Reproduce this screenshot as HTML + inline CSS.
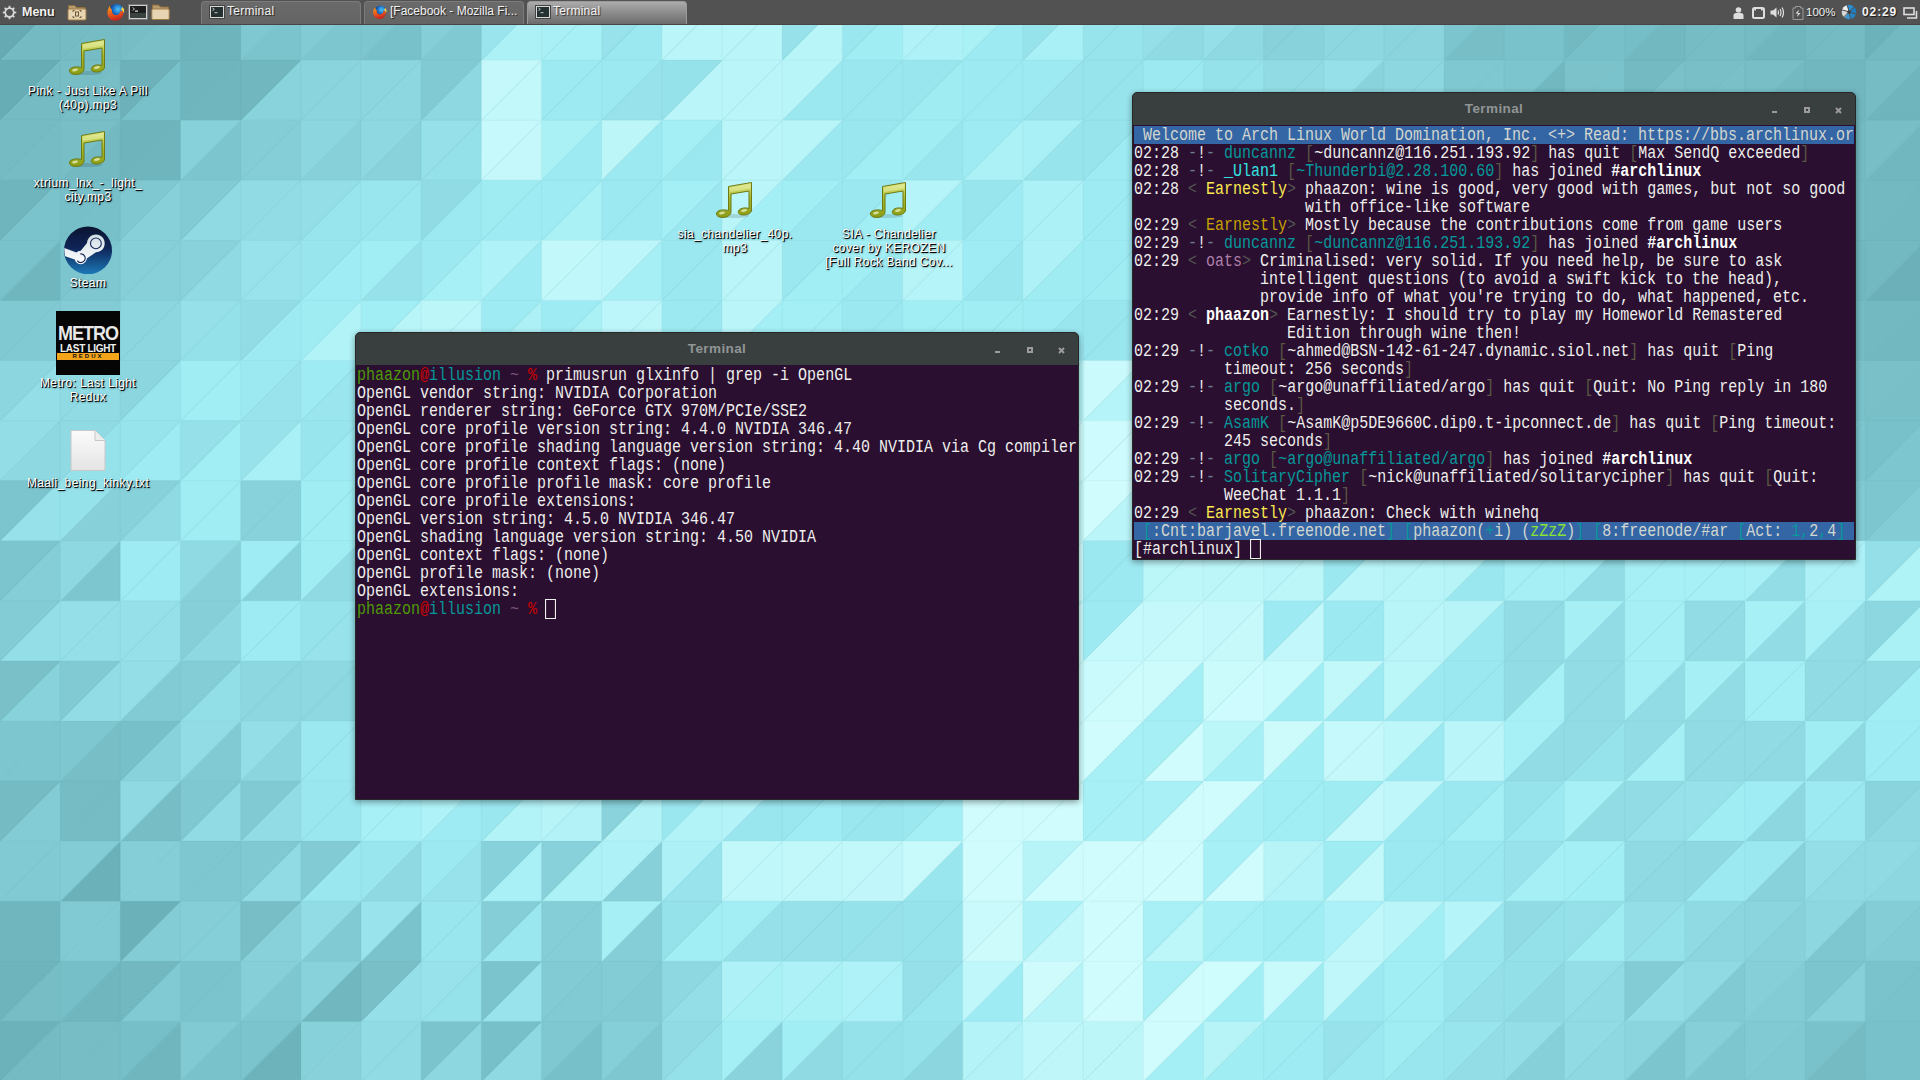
<!DOCTYPE html>
<html><head><meta charset="utf-8">
<style>
html,body{margin:0;padding:0;width:1920px;height:1080px;overflow:hidden;background:#8fd3dc;}
body{position:relative;font-family:"Liberation Sans",sans-serif;}
#bg{position:absolute;left:0;top:0;width:1920px;height:1080px;}
#panel{position:absolute;left:0;top:0;width:1920px;height:25px;background:#4b4b4b;}
.win{position:absolute;background:#393f3f;border:1px solid #262828;border-radius:5px 5px 0 0;box-shadow:0 2px 6px rgba(0,0,0,0.4);}
.title{position:absolute;left:0;right:0;top:0;height:32px;text-align:center;color:#909595;font-weight:bold;font-size:13.5px;letter-spacing:0.4px;line-height:32px;}
.wb{position:absolute;}
.term{position:absolute;left:0;right:0;bottom:0;background:#2a0f30;font-family:"Liberation Mono",monospace;font-size:15px;line-height:18px;color:#eeeeec;overflow:hidden;}
.term .l{height:18px;white-space:pre;}
.term .tx{transform:scaleY(1.2);transform-origin:0 0;height:18px;}
.term .bar{background:#3465a4;width:720px;}
.g{color:#4e9a06}.r{color:#cc0000}.c{color:#06989a}.cb{color:#34e2e2}.y{color:#fce94f}.yd{color:#c4a000}.gr{color:#555753}.dm{color:#75507b}.w{color:#eeeeec}.b{font-weight:bold;color:#ffffff}.br{color:#5a5744}.mv{color:#ad7fa8}.gn{color:#8ae234}
.ex{color:#6b7d8f}
.ttl{color:#d3d7cf;}
.st{color:#d3d7cf}.stc{color:#06989a}.stg{color:#8ae234}
.cur{display:inline-block;width:11px;margin:-0.83px -1px 0 -1px;height:16.67px;vertical-align:top;box-shadow:inset 0 0 0 1.1px #eeeeec;}
#panel{background:#525252;box-shadow:inset 0 -1px 0 #494545;}
.pi{position:absolute;}
.ptxt{position:absolute;color:#f2f2f2;font-size:12px;line-height:14px;white-space:nowrap;text-shadow:1px 1px 1px rgba(0,0,0,0.7);}
.task{position:absolute;top:1px;height:23px;border:1px solid #7b7b7b;border-bottom:none;border-radius:4px 4px 0 0;box-sizing:border-box;background:linear-gradient(#6a6a6a,#646464);}
.task.act{background:linear-gradient(#ababab,#6c6c6c);border-color:#9a9a9a;}
.dl{position:absolute;color:#fff;font-size:12px;letter-spacing:0.4px;line-height:14px;text-align:center;white-space:nowrap;text-shadow:1px 1px 0 #000,1px 1px 2px rgba(0,0,0,0.8);}

</style></head><body>
<div id="bg"><svg width="1920" height="1080" viewBox="0 0 1920 1080"><path fill="#66abb4" d="M0.0 0.0H60.8L0.0 60.7Z"/><path fill="#73bac3" d="M60.8 0.0V60.7H0.0Z"/><path fill="#74bbc4" d="M60.2 0.0H120.9L60.2 60.7Z"/><path fill="#75bcc5" d="M120.9 0.0V60.7H60.2Z"/><path fill="#76bdc6" d="M120.3 0.0H181.1L120.3 60.7Z"/><path fill="#78bfc8" d="M181.1 0.0V60.7H120.3Z"/><path fill="#6db3bc" d="M180.5 0.0H241.3L180.5 60.7Z"/><path fill="#6eb4bd" d="M241.3 0.0V60.7H180.5Z"/><path fill="#80c8d1" d="M240.7 0.0H301.5L240.7 60.7Z"/><path fill="#7cc4cd" d="M301.5 0.0V60.7H240.7Z"/><path fill="#82cbd4" d="M300.9 0.0H361.6L300.9 60.7Z"/><path fill="#7ec6cf" d="M361.6 0.0V60.7H300.9Z"/><path fill="#7ec6cf" d="M361.0 0.0H421.8L361.0 60.7Z"/><path fill="#79c1ca" d="M421.8 0.0V60.7H361.0Z"/><path fill="#85ced7" d="M421.2 0.0H482.0L421.2 60.7Z"/><path fill="#80c9d2" d="M482.0 0.0V60.7H421.2Z"/><path fill="#99e4ed" d="M481.4 0.0H542.1L481.4 60.7Z"/><path fill="#acf1f6" d="M542.1 0.0V60.7H481.4Z"/><path fill="#a8f0f6" d="M541.5 0.0H602.3L541.5 60.7Z"/><path fill="#a7f0f6" d="M602.3 0.0V60.7H541.5Z"/><path fill="#97e2eb" d="M601.7 0.0H662.5L601.7 60.7Z"/><path fill="#9ce8f1" d="M662.5 0.0V60.7H601.7Z"/><path fill="#b9f5f9" d="M661.9 0.0H722.6L661.9 60.7Z"/><path fill="#b9f5f9" d="M722.6 0.0V60.7H661.9Z"/><path fill="#b9f5f9" d="M722.0 0.0H782.8L722.0 60.7Z"/><path fill="#b9f5f9" d="M782.8 0.0V60.7H722.0Z"/><path fill="#96e1ea" d="M782.2 0.0H843.0L782.2 60.7Z"/><path fill="#b8f5f9" d="M843.0 0.0V60.7H782.2Z"/><path fill="#9be7f0" d="M842.4 0.0H903.2L842.4 60.7Z"/><path fill="#a0edf4" d="M903.2 0.0V60.7H842.4Z"/><path fill="#b0f2f7" d="M902.6 0.0H963.3L902.6 60.7Z"/><path fill="#aef2f7" d="M963.3 0.0V60.7H902.6Z"/><path fill="#aaf1f6" d="M962.7 0.0H1023.5L962.7 60.7Z"/><path fill="#9deaf2" d="M1023.5 0.0V60.7H962.7Z"/><path fill="#97e3ec" d="M1022.9 0.0H1083.7L1022.9 60.7Z"/><path fill="#a8f0f6" d="M1083.7 0.0V60.7H1022.9Z"/><path fill="#98e4ed" d="M1083.1 0.0H1143.8L1083.1 60.7Z"/><path fill="#98e4ed" d="M1143.8 0.0V60.7H1083.1Z"/><path fill="#94dfe8" d="M1143.2 0.0H1204.0L1143.2 60.7Z"/><path fill="#8fdae3" d="M1204.0 0.0V60.7H1143.2Z"/><path fill="#94dfe8" d="M1203.4 0.0H1264.2L1203.4 60.7Z"/><path fill="#8fd9e2" d="M1264.2 0.0V60.7H1203.4Z"/><path fill="#88d1da" d="M1263.6 0.0H1324.3L1263.6 60.7Z"/><path fill="#88d2db" d="M1324.3 0.0V60.7H1263.6Z"/><path fill="#8cd7e0" d="M1323.7 0.0H1384.5L1323.7 60.7Z"/><path fill="#8dd7e0" d="M1384.5 0.0V60.7H1323.7Z"/><path fill="#8ad4dd" d="M1383.9 0.0H1444.7L1383.9 60.7Z"/><path fill="#8bd4dd" d="M1444.7 0.0V60.7H1383.9Z"/><path fill="#7dc5ce" d="M1444.1 0.0H1504.8L1444.1 60.7Z"/><path fill="#77bec7" d="M1504.8 0.0V60.7H1444.1Z"/><path fill="#7ac2cb" d="M1504.2 0.0H1565.0L1504.2 60.7Z"/><path fill="#7ac2cb" d="M1565.0 0.0V60.7H1504.2Z"/><path fill="#72b9c2" d="M1564.4 0.0H1625.2L1564.4 60.7Z"/><path fill="#78c0c9" d="M1625.2 0.0V60.7H1564.4Z"/><path fill="#76bec7" d="M1624.6 0.0H1685.4L1624.6 60.7Z"/><path fill="#71b8c1" d="M1685.4 0.0V60.7H1624.6Z"/><path fill="#75bcc5" d="M1684.8 0.0H1745.5L1684.8 60.7Z"/><path fill="#76bdc6" d="M1745.5 0.0V60.7H1684.8Z"/><path fill="#74bbc4" d="M1744.9 0.0H1805.7L1744.9 60.7Z"/><path fill="#6fb6bf" d="M1805.7 0.0V60.7H1744.9Z"/><path fill="#73bac3" d="M1805.1 0.0H1865.9L1805.1 60.7Z"/><path fill="#74bbc4" d="M1865.9 0.0V60.7H1805.1Z"/><path fill="#6cb2bb" d="M1865.3 0.0H1926.0L1865.3 60.7Z"/><path fill="#72b9c2" d="M1926.0 0.0V60.7H1865.3Z"/><path fill="#67adb6" d="M0.0 60.1H60.8L0.0 120.8Z"/><path fill="#74bbc4" d="M60.8 60.1V120.8H0.0Z"/><path fill="#76bdc6" d="M60.2 60.1H120.9L60.2 120.8Z"/><path fill="#77bec7" d="M120.9 60.1V120.8H60.2Z"/><path fill="#6db2bb" d="M120.3 60.1H181.1L120.3 120.8Z"/><path fill="#79c1ca" d="M181.1 60.1V120.8H120.3Z"/><path fill="#6fb5be" d="M180.5 60.1H241.3L180.5 120.8Z"/><path fill="#70b6bf" d="M241.3 60.1V120.8H180.5Z"/><path fill="#71b7c0" d="M240.7 60.1H301.5L240.7 120.8Z"/><path fill="#89d3dc" d="M301.5 60.1V120.8H240.7Z"/><path fill="#8ad4dd" d="M300.9 60.1H361.6L300.9 120.8Z"/><path fill="#8bd5de" d="M361.6 60.1V120.8H300.9Z"/><path fill="#8cd6df" d="M361.0 60.1H421.8L361.0 120.8Z"/><path fill="#8dd7e0" d="M421.8 60.1V120.8H361.0Z"/><path fill="#82cad3" d="M421.2 60.1H482.0L421.2 120.8Z"/><path fill="#8ed8e1" d="M482.0 60.1V120.8H421.2Z"/><path fill="#c4f8fb" d="M481.4 60.1H542.1L481.4 120.8Z"/><path fill="#c3f8fb" d="M542.1 60.1V120.8H481.4Z"/><path fill="#9eeaf2" d="M541.5 60.1H602.3L541.5 120.8Z"/><path fill="#9deaf2" d="M602.3 60.1V120.8H541.5Z"/><path fill="#9ce9f1" d="M601.7 60.1H662.5L601.7 120.8Z"/><path fill="#97e2eb" d="M662.5 60.1V120.8H601.7Z"/><path fill="#96e2eb" d="M661.9 60.1H722.6L661.9 120.8Z"/><path fill="#b9f5f9" d="M722.6 60.1V120.8H661.9Z"/><path fill="#b9f5f9" d="M722.0 60.1H782.8L722.0 120.8Z"/><path fill="#b9f5f9" d="M782.8 60.1V120.8H722.0Z"/><path fill="#b8f5f9" d="M782.2 60.1H843.0L782.2 120.8Z"/><path fill="#9ce8f1" d="M843.0 60.1V120.8H782.2Z"/><path fill="#9be7f0" d="M842.4 60.1H903.2L842.4 120.8Z"/><path fill="#9be7f0" d="M903.2 60.1V120.8H842.4Z"/><path fill="#9ae6ef" d="M902.6 60.1H963.3L902.6 120.8Z"/><path fill="#9fecf3" d="M963.3 60.1V120.8H902.6Z"/><path fill="#9eeaf2" d="M962.7 60.1H1023.5L962.7 120.8Z"/><path fill="#9eeaf2" d="M1023.5 60.1V120.8H962.7Z"/><path fill="#9deaf2" d="M1022.9 60.1H1083.7L1022.9 120.8Z"/><path fill="#98e3ec" d="M1083.7 60.1V120.8H1022.9Z"/><path fill="#98e4ed" d="M1083.1 60.1H1143.8L1083.1 120.8Z"/><path fill="#98e4ed" d="M1143.8 60.1V120.8H1083.1Z"/><path fill="#9ce9f1" d="M1143.2 60.1H1204.0L1143.2 120.8Z"/><path fill="#9de9f2" d="M1204.0 60.1V120.8H1143.2Z"/><path fill="#96e2eb" d="M1203.4 60.1H1264.2L1203.4 120.8Z"/><path fill="#97e3ec" d="M1264.2 60.1V120.8H1203.4Z"/><path fill="#90dbe4" d="M1263.6 60.1H1324.3L1263.6 120.8Z"/><path fill="#91dbe4" d="M1324.3 60.1V120.8H1263.6Z"/><path fill="#95e0e9" d="M1323.7 60.1H1384.5L1323.7 120.8Z"/><path fill="#89d3dc" d="M1384.5 60.1V120.8H1323.7Z"/><path fill="#8dd7e0" d="M1383.9 60.1H1444.7L1383.9 120.8Z"/><path fill="#8dd7e0" d="M1444.7 60.1V120.8H1383.9Z"/><path fill="#7fc8d1" d="M1444.1 60.1H1504.8L1444.1 120.8Z"/><path fill="#7fc8d1" d="M1504.8 60.1V120.8H1444.1Z"/><path fill="#7dc5ce" d="M1504.2 60.1H1565.0L1504.2 120.8Z"/><path fill="#71b8c1" d="M1565.0 60.1V120.8H1504.2Z"/><path fill="#7bc2cb" d="M1564.4 60.1H1625.2L1564.4 120.8Z"/><path fill="#7bc3cc" d="M1625.2 60.1V120.8H1564.4Z"/><path fill="#73bac3" d="M1624.6 60.1H1685.4L1624.6 120.8Z"/><path fill="#7ac1ca" d="M1685.4 60.1V120.8H1624.6Z"/><path fill="#78bfc8" d="M1684.8 60.1H1745.5L1684.8 120.8Z"/><path fill="#79c0c9" d="M1745.5 60.1V120.8H1684.8Z"/><path fill="#77bec7" d="M1744.9 60.1H1805.7L1744.9 120.8Z"/><path fill="#72b9c2" d="M1805.7 60.1V120.8H1744.9Z"/><path fill="#71b7c0" d="M1805.1 60.1H1865.9L1805.1 120.8Z"/><path fill="#71b7c0" d="M1865.9 60.1V120.8H1805.1Z"/><path fill="#75bcc5" d="M1865.3 60.1H1926.0L1865.3 120.8Z"/><path fill="#6fb5be" d="M1926.0 60.1V120.8H1865.3Z"/><path fill="#74bbc4" d="M0.0 120.2H60.8L0.0 180.8Z"/><path fill="#75bcc5" d="M60.8 120.2V180.8H0.0Z"/><path fill="#77bec7" d="M60.2 120.2H120.9L60.2 180.8Z"/><path fill="#72b9c2" d="M120.9 120.2V180.8H60.2Z"/><path fill="#6eb4bd" d="M120.3 120.2H181.1L120.3 180.8Z"/><path fill="#6fb5be" d="M181.1 120.2V180.8H120.3Z"/><path fill="#87d1da" d="M180.5 120.2H241.3L180.5 180.8Z"/><path fill="#7dc5ce" d="M241.3 120.2V180.8H180.5Z"/><path fill="#84cdd6" d="M240.7 120.2H301.5L240.7 180.8Z"/><path fill="#85ced7" d="M301.5 120.2V180.8H240.7Z"/><path fill="#8cd6df" d="M300.9 120.2H361.6L300.9 180.8Z"/><path fill="#87d0d9" d="M361.6 120.2V180.8H300.9Z"/><path fill="#8dd8e1" d="M361.0 120.2H421.8L361.0 180.8Z"/><path fill="#89d2db" d="M421.8 120.2V180.8H361.0Z"/><path fill="#95e0e9" d="M421.2 120.2H482.0L421.2 180.8Z"/><path fill="#95e1ea" d="M482.0 120.2V180.8H421.2Z"/><path fill="#c5f9fb" d="M481.4 120.2H542.1L481.4 180.8Z"/><path fill="#c4f8fb" d="M542.1 120.2V180.8H481.4Z"/><path fill="#aaf1f6" d="M541.5 120.2H602.3L541.5 180.8Z"/><path fill="#9deaf2" d="M602.3 120.2V180.8H541.5Z"/><path fill="#bcf6f9" d="M601.7 120.2H662.5L601.7 180.8Z"/><path fill="#9ce9f1" d="M662.5 120.2V180.8H601.7Z"/><path fill="#a4eff5" d="M661.9 120.2H722.6L661.9 180.8Z"/><path fill="#9ce8f1" d="M722.6 120.2V180.8H661.9Z"/><path fill="#b9f5f9" d="M722.0 120.2H782.8L722.0 180.8Z"/><path fill="#b9f5f9" d="M782.8 120.2V180.8H722.0Z"/><path fill="#b8f5f9" d="M782.2 120.2H843.0L782.2 180.8Z"/><path fill="#9ce8f1" d="M843.0 120.2V180.8H782.2Z"/><path fill="#9be7f0" d="M842.4 120.2H903.2L842.4 180.8Z"/><path fill="#a1eef4" d="M903.2 120.2V180.8H842.4Z"/><path fill="#a0edf4" d="M902.6 120.2H963.3L902.6 180.8Z"/><path fill="#9ae6ef" d="M963.3 120.2V180.8H902.6Z"/><path fill="#9eebf3" d="M962.7 120.2H1023.5L962.7 180.8Z"/><path fill="#acf1f6" d="M1023.5 120.2V180.8H962.7Z"/><path fill="#a9f0f6" d="M1022.9 120.2H1083.7L1022.9 180.8Z"/><path fill="#98e4ed" d="M1083.7 120.2V180.8H1022.9Z"/><path fill="#98e4ed" d="M1083.1 120.2H1143.8L1083.1 180.8Z"/><path fill="#9eebf3" d="M1143.8 120.2V180.8H1083.1Z"/><path fill="#9eebf3" d="M1143.2 120.2H1204.0L1143.2 180.8Z"/><path fill="#9fecf3" d="M1204.0 120.2V180.8H1143.2Z"/><path fill="#98e4ed" d="M1203.4 120.2H1264.2L1203.4 180.8Z"/><path fill="#99e5ee" d="M1264.2 120.2V180.8H1203.4Z"/><path fill="#92dde6" d="M1263.6 120.2H1324.3L1263.6 180.8Z"/><path fill="#93dee7" d="M1324.3 120.2V180.8H1263.6Z"/><path fill="#91dce5" d="M1323.7 120.2H1384.5L1323.7 180.8Z"/><path fill="#91dce5" d="M1384.5 120.2V180.8H1323.7Z"/><path fill="#8fdae3" d="M1383.9 120.2H1444.7L1383.9 180.8Z"/><path fill="#8fdae3" d="M1444.7 120.2V180.8H1383.9Z"/><path fill="#82cad3" d="M1444.1 120.2H1504.8L1444.1 180.8Z"/><path fill="#81cad3" d="M1504.8 120.2V180.8H1444.1Z"/><path fill="#79c1ca" d="M1504.2 120.2H1565.0L1504.2 180.8Z"/><path fill="#79c1ca" d="M1565.0 120.2V180.8H1504.2Z"/><path fill="#7dc5ce" d="M1564.4 120.2H1625.2L1564.4 180.8Z"/><path fill="#7dc5ce" d="M1625.2 120.2V180.8H1564.4Z"/><path fill="#79c0c9" d="M1624.6 120.2H1685.4L1624.6 180.8Z"/><path fill="#79c0c9" d="M1685.4 120.2V180.8H1624.6Z"/><path fill="#7ac2cb" d="M1684.8 120.2H1745.5L1684.8 180.8Z"/><path fill="#7bc3cc" d="M1745.5 120.2V180.8H1684.8Z"/><path fill="#77bec7" d="M1744.9 120.2H1805.7L1744.9 180.8Z"/><path fill="#77bec7" d="M1805.7 120.2V180.8H1744.9Z"/><path fill="#73b9c2" d="M1805.1 120.2H1865.9L1805.1 180.8Z"/><path fill="#73bac3" d="M1865.9 120.2V180.8H1805.1Z"/><path fill="#77bec7" d="M1865.3 120.2H1926.0L1865.3 180.8Z"/><path fill="#71b7c0" d="M1926.0 120.2V180.8H1865.3Z"/><path fill="#6fb5be" d="M0.0 180.2H60.8L0.0 240.9Z"/><path fill="#7bc3cc" d="M60.8 180.2V240.9H0.0Z"/><path fill="#77bfc8" d="M60.2 180.2H120.9L60.2 240.9Z"/><path fill="#78c0c9" d="M120.9 180.2V240.9H60.2Z"/><path fill="#80c8d1" d="M120.3 180.2H181.1L120.3 240.9Z"/><path fill="#87d0d9" d="M181.1 180.2V240.9H120.3Z"/><path fill="#82cbd4" d="M180.5 180.2H241.3L180.5 240.9Z"/><path fill="#8fdae3" d="M241.3 180.2V240.9H180.5Z"/><path fill="#90dbe4" d="M240.7 180.2H301.5L240.7 240.9Z"/><path fill="#91dce5" d="M301.5 180.2V240.9H240.7Z"/><path fill="#93dee7" d="M300.9 180.2H361.6L300.9 240.9Z"/><path fill="#99e5ee" d="M361.6 180.2V240.9H300.9Z"/><path fill="#9ae6ef" d="M361.0 180.2H421.8L361.0 240.9Z"/><path fill="#9be7f0" d="M421.8 180.2V240.9H361.0Z"/><path fill="#90dbe4" d="M421.2 180.2H482.0L421.2 240.9Z"/><path fill="#9ce9f1" d="M482.0 180.2V240.9H421.2Z"/><path fill="#9fecf3" d="M481.4 180.2H542.1L481.4 240.9Z"/><path fill="#9febf3" d="M542.1 180.2V240.9H481.4Z"/><path fill="#9eebf3" d="M541.5 180.2H602.3L541.5 240.9Z"/><path fill="#aaf1f6" d="M602.3 180.2V240.9H541.5Z"/><path fill="#9de9f2" d="M601.7 180.2H662.5L601.7 240.9Z"/><path fill="#9de9f2" d="M662.5 180.2V240.9H601.7Z"/><path fill="#a4eff5" d="M661.9 180.2H722.6L661.9 240.9Z"/><path fill="#9ce8f1" d="M722.6 180.2V240.9H661.9Z"/><path fill="#b9f5f9" d="M722.0 180.2H782.8L722.0 240.9Z"/><path fill="#a3eff5" d="M782.8 180.2V240.9H722.0Z"/><path fill="#a2eef5" d="M782.2 180.2H843.0L782.2 240.9Z"/><path fill="#9ce8f1" d="M843.0 180.2V240.9H782.2Z"/><path fill="#9be8f1" d="M842.4 180.2H903.2L842.4 240.9Z"/><path fill="#a1eef5" d="M903.2 180.2V240.9H842.4Z"/><path fill="#b5f4f8" d="M902.6 180.2H963.3L902.6 240.9Z"/><path fill="#a0edf4" d="M963.3 180.2V240.9H902.6Z"/><path fill="#99e5ee" d="M962.7 180.2H1023.5L962.7 240.9Z"/><path fill="#9febf3" d="M1023.5 180.2V240.9H962.7Z"/><path fill="#abf1f6" d="M1022.9 180.2H1083.7L1022.9 240.9Z"/><path fill="#acf1f6" d="M1083.7 180.2V240.9H1022.9Z"/><path fill="#9eebf3" d="M1083.1 180.2H1143.8L1083.1 240.9Z"/><path fill="#9eebf3" d="M1143.8 180.2V240.9H1083.1Z"/><path fill="#98e3ec" d="M1143.2 180.2H1204.0L1143.2 240.9Z"/><path fill="#98e4ed" d="M1204.0 180.2V240.9H1143.2Z"/><path fill="#9ae6ef" d="M1203.4 180.2H1264.2L1203.4 240.9Z"/><path fill="#9be7f0" d="M1264.2 180.2V240.9H1203.4Z"/><path fill="#94dfe8" d="M1263.6 180.2H1324.3L1263.6 240.9Z"/><path fill="#94dfe8" d="M1324.3 180.2V240.9H1263.6Z"/><path fill="#93dee7" d="M1323.7 180.2H1384.5L1323.7 240.9Z"/><path fill="#93dee7" d="M1384.5 180.2V240.9H1323.7Z"/><path fill="#91dce5" d="M1383.9 180.2H1444.7L1383.9 240.9Z"/><path fill="#91dce5" d="M1444.7 180.2V240.9H1383.9Z"/><path fill="#83ccd5" d="M1444.1 180.2H1504.8L1444.1 240.9Z"/><path fill="#83ccd5" d="M1504.8 180.2V240.9H1444.1Z"/><path fill="#7bc3cc" d="M1504.2 180.2H1565.0L1504.2 240.9Z"/><path fill="#7bc3cc" d="M1565.0 180.2V240.9H1504.2Z"/><path fill="#7fc7d0" d="M1564.4 180.2H1625.2L1564.4 240.9Z"/><path fill="#7fc8d1" d="M1625.2 180.2V240.9H1564.4Z"/><path fill="#7bc2cb" d="M1624.6 180.2H1685.4L1624.6 240.9Z"/><path fill="#7bc3cc" d="M1685.4 180.2V240.9H1624.6Z"/><path fill="#7cc4cd" d="M1684.8 180.2H1745.5L1684.8 240.9Z"/><path fill="#7dc5ce" d="M1745.5 180.2V240.9H1684.8Z"/><path fill="#79c0c9" d="M1744.9 180.2H1805.7L1744.9 240.9Z"/><path fill="#79c0c9" d="M1805.7 180.2V240.9H1744.9Z"/><path fill="#74bbc4" d="M1805.1 180.2H1865.9L1805.1 240.9Z"/><path fill="#74bbc4" d="M1865.9 180.2V240.9H1805.1Z"/><path fill="#72b9c2" d="M1865.3 180.2H1926.0L1865.3 240.9Z"/><path fill="#71b8c1" d="M1926.0 180.2V240.9H1865.3Z"/><path fill="#7ac2cb" d="M0.0 240.3H60.8L0.0 301.0Z"/><path fill="#70b6bf" d="M60.8 240.3V301.0H0.0Z"/><path fill="#7dc5ce" d="M60.2 240.3H120.9L60.2 301.0Z"/><path fill="#7ec7d0" d="M120.9 240.3V301.0H60.2Z"/><path fill="#86cfd8" d="M120.3 240.3H181.1L120.3 301.0Z"/><path fill="#87d0d9" d="M181.1 240.3V301.0H120.3Z"/><path fill="#89d2db" d="M180.5 240.3H241.3L180.5 301.0Z"/><path fill="#90dae3" d="M241.3 240.3V301.0H180.5Z"/><path fill="#97e2eb" d="M240.7 240.3H301.5L240.7 301.0Z"/><path fill="#98e3ec" d="M301.5 240.3V301.0H240.7Z"/><path fill="#99e5ee" d="M300.9 240.3H361.6L300.9 301.0Z"/><path fill="#a0ecf4" d="M361.6 240.3V301.0H300.9Z"/><path fill="#a1eef4" d="M361.0 240.3H421.8L361.0 301.0Z"/><path fill="#96e1ea" d="M421.8 240.3V301.0H361.0Z"/><path fill="#9ce9f1" d="M421.2 240.3H482.0L421.2 301.0Z"/><path fill="#a7f0f6" d="M482.0 240.3V301.0H421.2Z"/><path fill="#aff2f7" d="M481.4 240.3H542.1L481.4 301.0Z"/><path fill="#9febf3" d="M542.1 240.3V301.0H481.4Z"/><path fill="#c2f8fa" d="M541.5 240.3H602.3L541.5 301.0Z"/><path fill="#c0f7fa" d="M602.3 240.3V301.0H541.5Z"/><path fill="#bdf6fa" d="M601.7 240.3H662.5L601.7 301.0Z"/><path fill="#a6eff5" d="M662.5 240.3V301.0H601.7Z"/><path fill="#9ce8f1" d="M661.9 240.3H722.6L661.9 301.0Z"/><path fill="#9ce8f1" d="M722.6 240.3V301.0H661.9Z"/><path fill="#b9f5f9" d="M722.0 240.3H782.8L722.0 301.0Z"/><path fill="#b9f5f9" d="M782.8 240.3V301.0H722.0Z"/><path fill="#9ce8f1" d="M782.2 240.3H843.0L782.2 301.0Z"/><path fill="#a2eef5" d="M843.0 240.3V301.0H782.2Z"/><path fill="#a2eef5" d="M842.4 240.3H903.2L842.4 301.0Z"/><path fill="#9be8f1" d="M903.2 240.3V301.0H842.4Z"/><path fill="#b6f4f8" d="M902.6 240.3H963.3L902.6 301.0Z"/><path fill="#b5f4f8" d="M963.3 240.3V301.0H902.6Z"/><path fill="#a0ecf4" d="M962.7 240.3H1023.5L962.7 301.0Z"/><path fill="#9ae6ef" d="M1023.5 240.3V301.0H962.7Z"/><path fill="#aef2f7" d="M1022.9 240.3H1083.7L1022.9 301.0Z"/><path fill="#9fecf3" d="M1083.7 240.3V301.0H1022.9Z"/><path fill="#9febf3" d="M1083.1 240.3H1143.8L1083.1 301.0Z"/><path fill="#9fecf3" d="M1143.8 240.3V301.0H1083.1Z"/><path fill="#9fecf3" d="M1143.2 240.3H1204.0L1143.2 301.0Z"/><path fill="#9fecf4" d="M1204.0 240.3V301.0H1143.2Z"/><path fill="#9febf3" d="M1203.4 240.3H1264.2L1203.4 301.0Z"/><path fill="#9fecf3" d="M1264.2 240.3V301.0H1203.4Z"/><path fill="#96e1ea" d="M1263.6 240.3H1324.3L1263.6 301.0Z"/><path fill="#96e1ea" d="M1324.3 240.3V301.0H1263.6Z"/><path fill="#94e0e9" d="M1323.7 240.3H1384.5L1323.7 301.0Z"/><path fill="#94dfe8" d="M1384.5 240.3V301.0H1323.7Z"/><path fill="#93dee7" d="M1383.9 240.3H1444.7L1383.9 301.0Z"/><path fill="#92dde6" d="M1444.7 240.3V301.0H1383.9Z"/><path fill="#85ced7" d="M1444.1 240.3H1504.8L1444.1 301.0Z"/><path fill="#85ced7" d="M1504.8 240.3V301.0H1444.1Z"/><path fill="#7dc5ce" d="M1504.2 240.3H1565.0L1504.2 301.0Z"/><path fill="#7dc5ce" d="M1565.0 240.3V301.0H1504.2Z"/><path fill="#81c9d2" d="M1564.4 240.3H1625.2L1564.4 301.0Z"/><path fill="#81c9d2" d="M1625.2 240.3V301.0H1564.4Z"/><path fill="#7dc5ce" d="M1624.6 240.3H1685.4L1624.6 301.0Z"/><path fill="#7dc5ce" d="M1685.4 240.3V301.0H1624.6Z"/><path fill="#7ec6cf" d="M1684.8 240.3H1745.5L1684.8 301.0Z"/><path fill="#7ec7d0" d="M1745.5 240.3V301.0H1684.8Z"/><path fill="#74bbc4" d="M1744.9 240.3H1805.7L1744.9 301.0Z"/><path fill="#74bbc4" d="M1805.7 240.3V301.0H1744.9Z"/><path fill="#72b9c2" d="M1805.1 240.3H1865.9L1805.1 301.0Z"/><path fill="#72b8c1" d="M1865.9 240.3V301.0H1805.1Z"/><path fill="#72b9c2" d="M1865.3 240.3H1926.0L1865.3 301.0Z"/><path fill="#6cb1ba" d="M1926.0 240.3V301.0H1865.3Z"/><path fill="#80c9d2" d="M0.0 300.4H60.8L0.0 361.1Z"/><path fill="#81cad3" d="M60.8 300.4V361.1H0.0Z"/><path fill="#83ccd5" d="M60.2 300.4H120.9L60.2 361.1Z"/><path fill="#84cdd6" d="M120.9 300.4V361.1H60.2Z"/><path fill="#8cd6df" d="M120.3 300.4H181.1L120.3 361.1Z"/><path fill="#8dd7e0" d="M181.1 300.4V361.1H120.3Z"/><path fill="#95e0e9" d="M180.5 300.4H241.3L180.5 361.1Z"/><path fill="#95e1ea" d="M241.3 300.4V361.1H180.5Z"/><path fill="#91dce5" d="M240.7 300.4H301.5L240.7 361.1Z"/><path fill="#9eeaf2" d="M301.5 300.4V361.1H240.7Z"/><path fill="#9fecf3" d="M300.9 300.4H361.6L300.9 361.1Z"/><path fill="#b1f3f7" d="M361.6 300.4V361.1H300.9Z"/><path fill="#a1eef4" d="M361.0 300.4H421.8L361.0 361.1Z"/><path fill="#b8f5f9" d="M421.8 300.4V361.1H361.0Z"/><path fill="#bcf6f9" d="M421.2 300.4H482.0L421.2 361.1Z"/><path fill="#bdf6fa" d="M482.0 300.4V361.1H421.2Z"/><path fill="#9febf3" d="M481.4 300.4H542.1L481.4 361.1Z"/><path fill="#adf1f7" d="M542.1 300.4V361.1H481.4Z"/><path fill="#9eebf3" d="M541.5 300.4H602.3L541.5 361.1Z"/><path fill="#aaf1f6" d="M602.3 300.4V361.1H541.5Z"/><path fill="#bdf6fa" d="M601.7 300.4H662.5L601.7 361.1Z"/><path fill="#bcf6f9" d="M662.5 300.4V361.1H601.7Z"/><path fill="#9ce9f1" d="M661.9 300.4H722.6L661.9 361.1Z"/><path fill="#9ce8f1" d="M722.6 300.4V361.1H661.9Z"/><path fill="#b9f5f9" d="M722.0 300.4H782.8L722.0 361.1Z"/><path fill="#a3eff5" d="M782.8 300.4V361.1H722.0Z"/><path fill="#a3eff5" d="M782.2 300.4H843.0L782.2 361.1Z"/><path fill="#a3eef5" d="M843.0 300.4V361.1H782.2Z"/><path fill="#9ce8f1" d="M842.4 300.4H903.2L842.4 361.1Z"/><path fill="#9ce8f1" d="M903.2 300.4V361.1H842.4Z"/><path fill="#a1eef5" d="M902.6 300.4H963.3L902.6 361.1Z"/><path fill="#a1eef5" d="M963.3 300.4V361.1H902.6Z"/><path fill="#a0edf4" d="M962.7 300.4H1023.5L962.7 361.1Z"/><path fill="#a0edf4" d="M1023.5 300.4V361.1H962.7Z"/><path fill="#a0ecf4" d="M1022.9 300.4H1083.7L1022.9 361.1Z"/><path fill="#9ae6ef" d="M1083.7 300.4V361.1H1022.9Z"/><path fill="#9ae6ef" d="M1083.1 300.4H1143.8L1083.1 361.1Z"/><path fill="#9ae6ef" d="M1143.8 300.4V361.1H1083.1Z"/><path fill="#abf1f6" d="M1143.2 300.4H1204.0L1143.2 361.1Z"/><path fill="#acf1f7" d="M1204.0 300.4V361.1H1143.2Z"/><path fill="#a8f0f6" d="M1203.4 300.4H1264.2L1203.4 361.1Z"/><path fill="#a9f0f6" d="M1264.2 300.4V361.1H1203.4Z"/><path fill="#a5eff5" d="M1263.6 300.4H1324.3L1263.6 361.1Z"/><path fill="#a5eff5" d="M1324.3 300.4V361.1H1263.6Z"/><path fill="#95e1ea" d="M1323.7 300.4H1384.5L1323.7 361.1Z"/><path fill="#95e1ea" d="M1384.5 300.4V361.1H1323.7Z"/><path fill="#94dfe8" d="M1383.9 300.4H1444.7L1383.9 361.1Z"/><path fill="#93dee7" d="M1444.7 300.4V361.1H1383.9Z"/><path fill="#86cfd8" d="M1444.1 300.4H1504.8L1444.1 361.1Z"/><path fill="#86cfd8" d="M1504.8 300.4V361.1H1444.1Z"/><path fill="#7ec6cf" d="M1504.2 300.4H1565.0L1504.2 361.1Z"/><path fill="#7ec6cf" d="M1565.0 300.4V361.1H1504.2Z"/><path fill="#82cbd4" d="M1564.4 300.4H1625.2L1564.4 361.1Z"/><path fill="#82cbd4" d="M1625.2 300.4V361.1H1564.4Z"/><path fill="#7ec6cf" d="M1624.6 300.4H1685.4L1624.6 361.1Z"/><path fill="#7ec6cf" d="M1685.4 300.4V361.1H1624.6Z"/><path fill="#7ac1ca" d="M1684.8 300.4H1745.5L1684.8 361.1Z"/><path fill="#79c1ca" d="M1745.5 300.4V361.1H1684.8Z"/><path fill="#78bfc8" d="M1744.9 300.4H1805.7L1744.9 361.1Z"/><path fill="#78bfc8" d="M1805.7 300.4V361.1H1744.9Z"/><path fill="#76bdc6" d="M1805.1 300.4H1865.9L1805.1 361.1Z"/><path fill="#75bcc5" d="M1865.9 300.4V361.1H1805.1Z"/><path fill="#73b9c2" d="M1865.3 300.4H1926.0L1865.3 361.1Z"/><path fill="#72b8c1" d="M1926.0 300.4V361.1H1865.3Z"/><path fill="#8cd6df" d="M0.0 360.5H60.8L0.0 421.2Z"/><path fill="#93dee7" d="M60.8 360.5V421.2H0.0Z"/><path fill="#8fdae3" d="M60.2 360.5H120.9L60.2 421.2Z"/><path fill="#90dbe4" d="M120.9 360.5V421.2H60.2Z"/><path fill="#8cd6df" d="M120.3 360.5H181.1L120.3 421.2Z"/><path fill="#99e5ee" d="M181.1 360.5V421.2H120.3Z"/><path fill="#a0edf4" d="M180.5 360.5H241.3L180.5 421.2Z"/><path fill="#a1eef5" d="M241.3 360.5V421.2H180.5Z"/><path fill="#9de9f2" d="M240.7 360.5H301.5L240.7 421.2Z"/><path fill="#98e3ec" d="M301.5 360.5V421.2H240.7Z"/><path fill="#9febf3" d="M300.9 360.5H361.6L300.9 421.2Z"/><path fill="#9ae5ee" d="M361.6 360.5V421.2H300.9Z"/><path fill="#b5f4f8" d="M361.0 360.5H421.8L361.0 421.2Z"/><path fill="#b6f4f8" d="M421.8 360.5V421.2H361.0Z"/><path fill="#bbf6f9" d="M421.2 360.5H482.0L421.2 421.2Z"/><path fill="#bbf6f9" d="M482.0 360.5V421.2H421.2Z"/><path fill="#bff7fa" d="M481.4 360.5H542.1L481.4 421.2Z"/><path fill="#bff7fa" d="M542.1 360.5V421.2H481.4Z"/><path fill="#b6f4f8" d="M541.5 360.5H602.3L541.5 421.2Z"/><path fill="#b6f4f8" d="M602.3 360.5V421.2H541.5Z"/><path fill="#c1f7fa" d="M601.7 360.5H662.5L601.7 421.2Z"/><path fill="#c0f7fa" d="M662.5 360.5V421.2H601.7Z"/><path fill="#aaf1f6" d="M661.9 360.5H722.6L661.9 421.2Z"/><path fill="#aaf1f6" d="M722.6 360.5V421.2H661.9Z"/><path fill="#d1fcfd" d="M722.0 360.5H782.8L722.0 421.2Z"/><path fill="#d1fcfd" d="M782.8 360.5V421.2H722.0Z"/><path fill="#b5f4f8" d="M782.2 360.5H843.0L782.2 421.2Z"/><path fill="#b6f4f8" d="M843.0 360.5V421.2H782.2Z"/><path fill="#a0edf4" d="M842.4 360.5H903.2L842.4 421.2Z"/><path fill="#a1edf4" d="M903.2 360.5V421.2H842.4Z"/><path fill="#bff7fa" d="M902.6 360.5H963.3L902.6 421.2Z"/><path fill="#bff7fa" d="M963.3 360.5V421.2H902.6Z"/><path fill="#bcf6f9" d="M962.7 360.5H1023.5L962.7 421.2Z"/><path fill="#bcf6f9" d="M1023.5 360.5V421.2H962.7Z"/><path fill="#b8f5f9" d="M1022.9 360.5H1083.7L1022.9 421.2Z"/><path fill="#b8f5f9" d="M1083.7 360.5V421.2H1022.9Z"/><path fill="#cafafc" d="M1083.1 360.5H1143.8L1083.1 421.2Z"/><path fill="#b5f4f8" d="M1143.8 360.5V421.2H1083.1Z"/><path fill="#bcf6f9" d="M1143.2 360.5H1204.0L1143.2 421.2Z"/><path fill="#bcf6f9" d="M1204.0 360.5V421.2H1143.2Z"/><path fill="#b8f5f9" d="M1203.4 360.5H1264.2L1203.4 421.2Z"/><path fill="#b8f5f9" d="M1264.2 360.5V421.2H1203.4Z"/><path fill="#b4f4f8" d="M1263.6 360.5H1324.3L1263.6 421.2Z"/><path fill="#b3f3f8" d="M1324.3 360.5V421.2H1263.6Z"/><path fill="#c4f8fb" d="M1323.7 360.5H1384.5L1323.7 421.2Z"/><path fill="#c3f8fb" d="M1384.5 360.5V421.2H1323.7Z"/><path fill="#bdf6fa" d="M1383.9 360.5H1444.7L1383.9 421.2Z"/><path fill="#bbf6f9" d="M1444.7 360.5V421.2H1383.9Z"/><path fill="#aaf1f6" d="M1444.1 360.5H1504.8L1444.1 421.2Z"/><path fill="#a8f0f6" d="M1504.8 360.5V421.2H1444.1Z"/><path fill="#b9f5f9" d="M1504.2 360.5H1565.0L1504.2 421.2Z"/><path fill="#b7f4f8" d="M1565.0 360.5V421.2H1504.2Z"/><path fill="#9fecf4" d="M1564.4 360.5H1625.2L1564.4 421.2Z"/><path fill="#9fecf3" d="M1625.2 360.5V421.2H1564.4Z"/><path fill="#abf1f6" d="M1624.6 360.5H1685.4L1624.6 421.2Z"/><path fill="#a9f0f6" d="M1685.4 360.5V421.2H1624.6Z"/><path fill="#80c8d1" d="M1684.8 360.5H1745.5L1684.8 421.2Z"/><path fill="#7fc7d0" d="M1745.5 360.5V421.2H1684.8Z"/><path fill="#7ec6cf" d="M1744.9 360.5H1805.7L1744.9 421.2Z"/><path fill="#7dc5ce" d="M1805.7 360.5V421.2H1744.9Z"/><path fill="#7cc4cd" d="M1805.1 360.5H1865.9L1805.1 421.2Z"/><path fill="#7bc3cc" d="M1865.9 360.5V421.2H1805.1Z"/><path fill="#79c0c9" d="M1865.3 360.5H1926.0L1865.3 421.2Z"/><path fill="#78bfc8" d="M1926.0 360.5V421.2H1865.3Z"/><path fill="#92dde6" d="M0.0 420.6H60.8L0.0 481.2Z"/><path fill="#8ed8e1" d="M60.8 420.6V481.2H0.0Z"/><path fill="#8fdae3" d="M60.2 420.6H120.9L60.2 481.2Z"/><path fill="#96e2eb" d="M120.9 420.6V481.2H60.2Z"/><path fill="#98e4ed" d="M120.3 420.6H181.1L120.3 481.2Z"/><path fill="#9febf3" d="M181.1 420.6V481.2H120.3Z"/><path fill="#95e0e9" d="M180.5 420.6H241.3L180.5 481.2Z"/><path fill="#a1eef5" d="M241.3 420.6V481.2H180.5Z"/><path fill="#97e2eb" d="M240.7 420.6H301.5L240.7 481.2Z"/><path fill="#a8f0f6" d="M301.5 420.6V481.2H240.7Z"/><path fill="#99e5ee" d="M300.9 420.6H361.6L300.9 481.2Z"/><path fill="#9febf3" d="M361.6 420.6V481.2H300.9Z"/><path fill="#9ae6ef" d="M361.0 420.6H421.8L361.0 481.2Z"/><path fill="#9be7f0" d="M421.8 420.6V481.2H361.0Z"/><path fill="#a2eef5" d="M421.2 420.6H482.0L421.2 481.2Z"/><path fill="#b9f5f9" d="M482.0 420.6V481.2H421.2Z"/><path fill="#b2f3f8" d="M481.4 420.6H542.1L481.4 481.2Z"/><path fill="#b2f3f8" d="M542.1 420.6V481.2H481.4Z"/><path fill="#b4f4f8" d="M541.5 420.6H602.3L541.5 481.2Z"/><path fill="#b4f4f8" d="M602.3 420.6V481.2H541.5Z"/><path fill="#c0f7fa" d="M601.7 420.6H662.5L601.7 481.2Z"/><path fill="#bff7fa" d="M662.5 420.6V481.2H601.7Z"/><path fill="#aaf1f6" d="M661.9 420.6H722.6L661.9 481.2Z"/><path fill="#a9f0f6" d="M722.6 420.6V481.2H661.9Z"/><path fill="#d1fcfd" d="M722.0 420.6H782.8L722.0 481.2Z"/><path fill="#d1fcfd" d="M782.8 420.6V481.2H722.0Z"/><path fill="#b6f4f8" d="M782.2 420.6H843.0L782.2 481.2Z"/><path fill="#b6f4f8" d="M843.0 420.6V481.2H782.2Z"/><path fill="#a1eef4" d="M842.4 420.6H903.2L842.4 481.2Z"/><path fill="#a1edf4" d="M903.2 420.6V481.2H842.4Z"/><path fill="#c0f7fa" d="M902.6 420.6H963.3L902.6 481.2Z"/><path fill="#bff7fa" d="M963.3 420.6V481.2H902.6Z"/><path fill="#bef7fa" d="M962.7 420.6H1023.5L962.7 481.2Z"/><path fill="#bef6fa" d="M1023.5 420.6V481.2H962.7Z"/><path fill="#d1fcfd" d="M1022.9 420.6H1083.7L1022.9 481.2Z"/><path fill="#d1fcfd" d="M1083.7 420.6V481.2H1022.9Z"/><path fill="#cefbfd" d="M1083.1 420.6H1143.8L1083.1 481.2Z"/><path fill="#cefbfd" d="M1143.8 420.6V481.2H1083.1Z"/><path fill="#cbfafc" d="M1143.2 420.6H1204.0L1143.2 481.2Z"/><path fill="#cafafc" d="M1204.0 420.6V481.2H1143.2Z"/><path fill="#c6f9fb" d="M1203.4 420.6H1264.2L1203.4 481.2Z"/><path fill="#c5f9fb" d="M1264.2 420.6V481.2H1203.4Z"/><path fill="#ccfbfc" d="M1263.6 420.6H1324.3L1263.6 481.2Z"/><path fill="#cbfafc" d="M1324.3 420.6V481.2H1263.6Z"/><path fill="#c6f9fb" d="M1323.7 420.6H1384.5L1323.7 481.2Z"/><path fill="#c4f8fb" d="M1384.5 420.6V481.2H1323.7Z"/><path fill="#bff7fa" d="M1383.9 420.6H1444.7L1383.9 481.2Z"/><path fill="#bdf6fa" d="M1444.7 420.6V481.2H1383.9Z"/><path fill="#acf1f7" d="M1444.1 420.6H1504.8L1444.1 481.2Z"/><path fill="#aaf1f6" d="M1504.8 420.6V481.2H1444.1Z"/><path fill="#baf5f9" d="M1504.2 420.6H1565.0L1504.2 481.2Z"/><path fill="#b8f5f9" d="M1565.0 420.6V481.2H1504.2Z"/><path fill="#a0edf4" d="M1564.4 420.6H1625.2L1564.4 481.2Z"/><path fill="#9fecf3" d="M1625.2 420.6V481.2H1564.4Z"/><path fill="#aaf1f6" d="M1624.6 420.6H1685.4L1624.6 481.2Z"/><path fill="#a8f0f6" d="M1685.4 420.6V481.2H1624.6Z"/><path fill="#a3eff5" d="M1684.8 420.6H1745.5L1684.8 481.2Z"/><path fill="#a1eef4" d="M1745.5 420.6V481.2H1684.8Z"/><path fill="#80c9d2" d="M1744.9 420.6H1805.7L1744.9 481.2Z"/><path fill="#80c8d1" d="M1805.7 420.6V481.2H1744.9Z"/><path fill="#7ec7d0" d="M1805.1 420.6H1865.9L1805.1 481.2Z"/><path fill="#7ec6cf" d="M1865.9 420.6V481.2H1805.1Z"/><path fill="#79c1ca" d="M1865.3 420.6H1926.0L1865.3 481.2Z"/><path fill="#7ec6cf" d="M1926.0 420.6V481.2H1865.3Z"/><path fill="#7dc5ce" d="M0.0 480.6H60.8L0.0 541.3Z"/><path fill="#96e1ea" d="M60.8 480.6V541.3H0.0Z"/><path fill="#96e2eb" d="M60.2 480.6H120.9L60.2 541.3Z"/><path fill="#87d0d9" d="M120.9 480.6V541.3H60.2Z"/><path fill="#87d1da" d="M120.3 480.6H181.1L120.3 541.3Z"/><path fill="#8fdae3" d="M181.1 480.6V541.3H120.3Z"/><path fill="#a0edf4" d="M180.5 480.6H241.3L180.5 541.3Z"/><path fill="#a0edf4" d="M241.3 480.6V541.3H180.5Z"/><path fill="#88d2db" d="M240.7 480.6H301.5L240.7 541.3Z"/><path fill="#88d2db" d="M301.5 480.6V541.3H240.7Z"/><path fill="#a0edf4" d="M300.9 480.6H361.6L300.9 541.3Z"/><path fill="#a0edf4" d="M361.6 480.6V541.3H300.9Z"/><path fill="#b1f3f7" d="M361.0 480.6H421.8L361.0 541.3Z"/><path fill="#b2f3f8" d="M421.8 480.6V541.3H361.0Z"/><path fill="#b6f4f8" d="M421.2 480.6H482.0L421.2 541.3Z"/><path fill="#b6f4f8" d="M482.0 480.6V541.3H421.2Z"/><path fill="#baf5f9" d="M481.4 480.6H542.1L481.4 541.3Z"/><path fill="#baf5f9" d="M542.1 480.6V541.3H481.4Z"/><path fill="#bcf6f9" d="M541.5 480.6H602.3L541.5 541.3Z"/><path fill="#bbf6f9" d="M602.3 480.6V541.3H541.5Z"/><path fill="#bdf6fa" d="M601.7 480.6H662.5L601.7 541.3Z"/><path fill="#bcf6f9" d="M662.5 480.6V541.3H601.7Z"/><path fill="#a8f0f6" d="M661.9 480.6H722.6L661.9 541.3Z"/><path fill="#a7f0f6" d="M722.6 480.6V541.3H661.9Z"/><path fill="#d1fcfd" d="M722.0 480.6H782.8L722.0 541.3Z"/><path fill="#d1fcfd" d="M782.8 480.6V541.3H722.0Z"/><path fill="#b4f4f8" d="M782.2 480.6H843.0L782.2 541.3Z"/><path fill="#b3f3f8" d="M843.0 480.6V541.3H782.2Z"/><path fill="#a0edf4" d="M842.4 480.6H903.2L842.4 541.3Z"/><path fill="#a0edf4" d="M903.2 480.6V541.3H842.4Z"/><path fill="#cafafc" d="M902.6 480.6H963.3L902.6 541.3Z"/><path fill="#c9fafc" d="M963.3 480.6V541.3H902.6Z"/><path fill="#c9fafc" d="M962.7 480.6H1023.5L962.7 541.3Z"/><path fill="#c9fafc" d="M1023.5 480.6V541.3H962.7Z"/><path fill="#c8f9fb" d="M1022.9 480.6H1083.7L1022.9 541.3Z"/><path fill="#c7f9fb" d="M1083.7 480.6V541.3H1022.9Z"/><path fill="#d0fcfd" d="M1083.1 480.6H1143.8L1083.1 541.3Z"/><path fill="#baf5f9" d="M1143.8 480.6V541.3H1083.1Z"/><path fill="#c2f8fa" d="M1143.2 480.6H1204.0L1143.2 541.3Z"/><path fill="#c2f8fa" d="M1204.0 480.6V541.3H1143.2Z"/><path fill="#d1fcfd" d="M1203.4 480.6H1264.2L1203.4 541.3Z"/><path fill="#d1fcfd" d="M1264.2 480.6V541.3H1203.4Z"/><path fill="#cefbfd" d="M1263.6 480.6H1324.3L1263.6 541.3Z"/><path fill="#cdfbfc" d="M1324.3 480.6V541.3H1263.6Z"/><path fill="#c7f9fb" d="M1323.7 480.6H1384.5L1323.7 541.3Z"/><path fill="#c5f9fb" d="M1384.5 480.6V541.3H1323.7Z"/><path fill="#c0f7fa" d="M1383.9 480.6H1444.7L1383.9 541.3Z"/><path fill="#bef6fa" d="M1444.7 480.6V541.3H1383.9Z"/><path fill="#adf2f7" d="M1444.1 480.6H1504.8L1444.1 541.3Z"/><path fill="#abf1f6" d="M1504.8 480.6V541.3H1444.1Z"/><path fill="#bbf6f9" d="M1504.2 480.6H1565.0L1504.2 541.3Z"/><path fill="#b9f5f9" d="M1565.0 480.6V541.3H1504.2Z"/><path fill="#a0edf4" d="M1564.4 480.6H1625.2L1564.4 541.3Z"/><path fill="#9fecf3" d="M1625.2 480.6V541.3H1564.4Z"/><path fill="#aaf1f6" d="M1624.6 480.6H1685.4L1624.6 541.3Z"/><path fill="#a7f0f6" d="M1685.4 480.6V541.3H1624.6Z"/><path fill="#a2eef5" d="M1684.8 480.6H1745.5L1684.8 541.3Z"/><path fill="#a0edf4" d="M1745.5 480.6V541.3H1684.8Z"/><path fill="#99e5ee" d="M1744.9 480.6H1805.7L1744.9 541.3Z"/><path fill="#98e4ed" d="M1805.7 480.6V541.3H1744.9Z"/><path fill="#83ccd5" d="M1805.1 480.6H1865.9L1805.1 541.3Z"/><path fill="#82cbd4" d="M1865.9 480.6V541.3H1805.1Z"/><path fill="#7ec6cf" d="M1865.3 480.6H1926.0L1865.3 541.3Z"/><path fill="#83ccd5" d="M1926.0 480.6V541.3H1865.3Z"/><path fill="#7dc5ce" d="M0.0 540.7H60.8L0.0 601.4Z"/><path fill="#85ced7" d="M60.8 540.7V601.4H0.0Z"/><path fill="#8ed8e1" d="M60.2 540.7H120.9L60.2 601.4Z"/><path fill="#7ec6cf" d="M120.9 540.7V601.4H60.2Z"/><path fill="#9febf3" d="M120.3 540.7H181.1L120.3 601.4Z"/><path fill="#9eebf3" d="M181.1 540.7V601.4H120.3Z"/><path fill="#8fdae3" d="M180.5 540.7H241.3L180.5 601.4Z"/><path fill="#87d0d9" d="M241.3 540.7V601.4H180.5Z"/><path fill="#a0ecf4" d="M240.7 540.7H301.5L240.7 601.4Z"/><path fill="#87d1da" d="M301.5 540.7V601.4H240.7Z"/><path fill="#a0edf4" d="M300.9 540.7H361.6L300.9 601.4Z"/><path fill="#90dae3" d="M361.6 540.7V601.4H300.9Z"/><path fill="#aef2f7" d="M361.0 540.7H421.8L361.0 601.4Z"/><path fill="#99e5ee" d="M421.8 540.7V601.4H361.0Z"/><path fill="#a0edf4" d="M421.2 540.7H482.0L421.2 601.4Z"/><path fill="#a0edf4" d="M482.0 540.7V601.4H421.2Z"/><path fill="#a1eef4" d="M481.4 540.7H542.1L481.4 601.4Z"/><path fill="#a1edf4" d="M542.1 540.7V601.4H481.4Z"/><path fill="#a2eef5" d="M541.5 540.7H602.3L541.5 601.4Z"/><path fill="#a1eef4" d="M602.3 540.7V601.4H541.5Z"/><path fill="#a3eef5" d="M601.7 540.7H662.5L601.7 601.4Z"/><path fill="#a1eef5" d="M662.5 540.7V601.4H601.7Z"/><path fill="#a3eff5" d="M661.9 540.7H722.6L661.9 601.4Z"/><path fill="#a1eef5" d="M722.6 540.7V601.4H661.9Z"/><path fill="#d0fcfd" d="M722.0 540.7H782.8L722.0 601.4Z"/><path fill="#cefbfd" d="M782.8 540.7V601.4H722.0Z"/><path fill="#b0f2f7" d="M782.2 540.7H843.0L782.2 601.4Z"/><path fill="#aef2f7" d="M843.0 540.7V601.4H782.2Z"/><path fill="#c7f9fb" d="M842.4 540.7H903.2L842.4 601.4Z"/><path fill="#c5f9fb" d="M903.2 540.7V601.4H842.4Z"/><path fill="#c8f9fb" d="M902.6 540.7H963.3L902.6 601.4Z"/><path fill="#c7f9fb" d="M963.3 540.7V601.4H902.6Z"/><path fill="#c8f9fb" d="M962.7 540.7H1023.5L962.7 601.4Z"/><path fill="#c8f9fb" d="M1023.5 540.7V601.4H962.7Z"/><path fill="#d1fcfd" d="M1022.9 540.7H1083.7L1022.9 601.4Z"/><path fill="#d1fcfd" d="M1083.7 540.7V601.4H1022.9Z"/><path fill="#9ce8f1" d="M1083.1 540.7H1143.8L1083.1 601.4Z"/><path fill="#9de9f2" d="M1143.8 540.7V601.4H1083.1Z"/><path fill="#bbf6f9" d="M1143.2 540.7H1204.0L1143.2 601.4Z"/><path fill="#bef7fa" d="M1204.0 540.7V601.4H1143.2Z"/><path fill="#bcf6f9" d="M1203.4 540.7H1264.2L1203.4 601.4Z"/><path fill="#bef7fa" d="M1264.2 540.7V601.4H1203.4Z"/><path fill="#baf5f9" d="M1263.6 540.7H1324.3L1263.6 601.4Z"/><path fill="#bcf6f9" d="M1324.3 540.7V601.4H1263.6Z"/><path fill="#9ce8f1" d="M1323.7 540.7H1384.5L1323.7 601.4Z"/><path fill="#b9f5f9" d="M1384.5 540.7V601.4H1323.7Z"/><path fill="#b7f4f8" d="M1383.9 540.7H1444.7L1383.9 601.4Z"/><path fill="#b7f5f9" d="M1444.7 540.7V601.4H1383.9Z"/><path fill="#b6f4f8" d="M1444.1 540.7H1504.8L1444.1 601.4Z"/><path fill="#9be7f0" d="M1504.8 540.7V601.4H1444.1Z"/><path fill="#a5eff5" d="M1504.2 540.7H1565.0L1504.2 601.4Z"/><path fill="#a5eff5" d="M1565.0 540.7V601.4H1504.2Z"/><path fill="#a5eff5" d="M1564.4 540.7H1625.2L1564.4 601.4Z"/><path fill="#91dce5" d="M1625.2 540.7V601.4H1564.4Z"/><path fill="#a6eff5" d="M1624.6 540.7H1685.4L1624.6 601.4Z"/><path fill="#a6f0f6" d="M1685.4 540.7V601.4H1624.6Z"/><path fill="#a7f0f6" d="M1684.8 540.7H1745.5L1684.8 601.4Z"/><path fill="#a7f0f6" d="M1745.5 540.7V601.4H1684.8Z"/><path fill="#a9f0f6" d="M1744.9 540.7H1805.7L1744.9 601.4Z"/><path fill="#92dde6" d="M1805.7 540.7V601.4H1744.9Z"/><path fill="#adf1f7" d="M1805.1 540.7H1865.9L1805.1 601.4Z"/><path fill="#adf1f7" d="M1865.9 540.7V601.4H1805.1Z"/><path fill="#94dfe8" d="M1865.3 540.7H1926.0L1865.3 601.4Z"/><path fill="#b0f3f7" d="M1926.0 540.7V601.4H1865.3Z"/><path fill="#83ccd5" d="M0.0 600.8H60.8L0.0 661.5Z"/><path fill="#93dee7" d="M60.8 600.8V661.5H0.0Z"/><path fill="#94dfe8" d="M60.2 600.8H120.9L60.2 661.5Z"/><path fill="#94dfe8" d="M120.9 600.8V661.5H60.2Z"/><path fill="#95e0e9" d="M120.3 600.8H181.1L120.3 661.5Z"/><path fill="#95e0e9" d="M181.1 600.8V661.5H120.3Z"/><path fill="#86cfd8" d="M180.5 600.8H241.3L180.5 661.5Z"/><path fill="#8dd8e1" d="M241.3 600.8V661.5H180.5Z"/><path fill="#9eebf3" d="M240.7 600.8H301.5L240.7 661.5Z"/><path fill="#9eebf3" d="M301.5 600.8V661.5H240.7Z"/><path fill="#97e3ec" d="M300.9 600.8H361.6L300.9 661.5Z"/><path fill="#97e2eb" d="M361.6 600.8V661.5H300.9Z"/><path fill="#a9f0f6" d="M361.0 600.8H421.8L361.0 661.5Z"/><path fill="#bff7fa" d="M421.8 600.8V661.5H361.0Z"/><path fill="#aef2f7" d="M421.2 600.8H482.0L421.2 661.5Z"/><path fill="#adf2f7" d="M482.0 600.8V661.5H421.2Z"/><path fill="#b1f3f7" d="M481.4 600.8H542.1L481.4 661.5Z"/><path fill="#aff2f7" d="M542.1 600.8V661.5H481.4Z"/><path fill="#b2f3f8" d="M541.5 600.8H602.3L541.5 661.5Z"/><path fill="#b0f2f7" d="M602.3 600.8V661.5H541.5Z"/><path fill="#b2f3f8" d="M601.7 600.8H662.5L601.7 661.5Z"/><path fill="#b0f2f7" d="M662.5 600.8V661.5H601.7Z"/><path fill="#b3f3f8" d="M661.9 600.8H722.6L661.9 661.5Z"/><path fill="#b0f3f7" d="M722.6 600.8V661.5H661.9Z"/><path fill="#b3f3f8" d="M722.0 600.8H782.8L722.0 661.5Z"/><path fill="#b1f3f7" d="M782.8 600.8V661.5H722.0Z"/><path fill="#a9f0f6" d="M782.2 600.8H843.0L782.2 661.5Z"/><path fill="#a7f0f6" d="M843.0 600.8V661.5H782.2Z"/><path fill="#a1eef4" d="M842.4 600.8H903.2L842.4 661.5Z"/><path fill="#a0edf4" d="M903.2 600.8V661.5H842.4Z"/><path fill="#c3f8fb" d="M902.6 600.8H963.3L902.6 661.5Z"/><path fill="#c2f8fa" d="M963.3 600.8V661.5H902.6Z"/><path fill="#c6f9fb" d="M962.7 600.8H1023.5L962.7 661.5Z"/><path fill="#c7f9fb" d="M1023.5 600.8V661.5H962.7Z"/><path fill="#bff7fa" d="M1022.9 600.8H1083.7L1022.9 661.5Z"/><path fill="#d1fcfd" d="M1083.7 600.8V661.5H1022.9Z"/><path fill="#9eeaf2" d="M1083.1 600.8H1143.8L1083.1 661.5Z"/><path fill="#c6f9fb" d="M1143.8 600.8V661.5H1083.1Z"/><path fill="#c4f8fb" d="M1143.2 600.8H1204.0L1143.2 661.5Z"/><path fill="#c8f9fb" d="M1204.0 600.8V661.5H1143.2Z"/><path fill="#c4f8fb" d="M1203.4 600.8H1264.2L1203.4 661.5Z"/><path fill="#c7f9fb" d="M1264.2 600.8V661.5H1203.4Z"/><path fill="#9eeaf2" d="M1263.6 600.8H1324.3L1263.6 661.5Z"/><path fill="#c2f8fb" d="M1324.3 600.8V661.5H1263.6Z"/><path fill="#9de9f2" d="M1323.7 600.8H1384.5L1323.7 661.5Z"/><path fill="#9de9f2" d="M1384.5 600.8V661.5H1323.7Z"/><path fill="#b8f5f9" d="M1383.9 600.8H1444.7L1383.9 661.5Z"/><path fill="#b9f5f9" d="M1444.7 600.8V661.5H1383.9Z"/><path fill="#b7f4f8" d="M1444.1 600.8H1504.8L1444.1 661.5Z"/><path fill="#9be8f1" d="M1504.8 600.8V661.5H1444.1Z"/><path fill="#91dce5" d="M1504.2 600.8H1565.0L1504.2 661.5Z"/><path fill="#91dce5" d="M1565.0 600.8V661.5H1504.2Z"/><path fill="#a5eff5" d="M1564.4 600.8H1625.2L1564.4 661.5Z"/><path fill="#91dce5" d="M1625.2 600.8V661.5H1564.4Z"/><path fill="#a5eff5" d="M1624.6 600.8H1685.4L1624.6 661.5Z"/><path fill="#a5eff5" d="M1685.4 600.8V661.5H1624.6Z"/><path fill="#91dce5" d="M1684.8 600.8H1745.5L1684.8 661.5Z"/><path fill="#91dce5" d="M1745.5 600.8V661.5H1684.8Z"/><path fill="#a6f0f6" d="M1744.9 600.8H1805.7L1744.9 661.5Z"/><path fill="#91dce5" d="M1805.7 600.8V661.5H1744.9Z"/><path fill="#a8f0f6" d="M1805.1 600.8H1865.9L1805.1 661.5Z"/><path fill="#92dce5" d="M1865.9 600.8V661.5H1805.1Z"/><path fill="#8dd7e0" d="M1865.3 600.8H1926.0L1865.3 661.5Z"/><path fill="#aaf1f6" d="M1926.0 600.8V661.5H1865.3Z"/><path fill="#79c0c9" d="M0.0 660.9H60.8L0.0 721.6Z"/><path fill="#88d2db" d="M60.8 660.9V721.6H0.0Z"/><path fill="#82cad3" d="M60.2 660.9H120.9L60.2 721.6Z"/><path fill="#91dce5" d="M120.9 660.9V721.6H60.2Z"/><path fill="#93dee7" d="M120.3 660.9H181.1L120.3 721.6Z"/><path fill="#82cbd4" d="M181.1 660.9V721.6H120.3Z"/><path fill="#84cdd6" d="M180.5 660.9H241.3L180.5 721.6Z"/><path fill="#93dfe8" d="M241.3 660.9V721.6H180.5Z"/><path fill="#8dd7e0" d="M240.7 660.9H301.5L240.7 721.6Z"/><path fill="#8cd7e0" d="M301.5 660.9V721.6H240.7Z"/><path fill="#8ed8e1" d="M300.9 660.9H361.6L300.9 721.6Z"/><path fill="#8dd8e1" d="M361.6 660.9V721.6H300.9Z"/><path fill="#9ce8f1" d="M361.0 660.9H421.8L361.0 721.6Z"/><path fill="#a2eef5" d="M421.8 660.9V721.6H361.0Z"/><path fill="#a8f0f6" d="M421.2 660.9H482.0L421.2 721.6Z"/><path fill="#a7f0f6" d="M482.0 660.9V721.6H421.2Z"/><path fill="#abf1f6" d="M481.4 660.9H542.1L481.4 721.6Z"/><path fill="#aaf1f6" d="M542.1 660.9V721.6H481.4Z"/><path fill="#acf1f7" d="M541.5 660.9H602.3L541.5 721.6Z"/><path fill="#aaf1f6" d="M602.3 660.9V721.6H541.5Z"/><path fill="#9be7f0" d="M601.7 660.9H662.5L601.7 721.6Z"/><path fill="#9be7f0" d="M662.5 660.9V721.6H601.7Z"/><path fill="#acf1f7" d="M661.9 660.9H722.6L661.9 721.6Z"/><path fill="#aaf1f6" d="M722.6 660.9V721.6H661.9Z"/><path fill="#acf1f7" d="M722.0 660.9H782.8L722.0 721.6Z"/><path fill="#aaf1f6" d="M782.8 660.9V721.6H722.0Z"/><path fill="#a2eef5" d="M782.2 660.9H843.0L782.2 721.6Z"/><path fill="#a1eef4" d="M843.0 660.9V721.6H782.2Z"/><path fill="#9febf3" d="M842.4 660.9H903.2L842.4 721.6Z"/><path fill="#9eebf3" d="M903.2 660.9V721.6H842.4Z"/><path fill="#a7f0f6" d="M902.6 660.9H963.3L902.6 721.6Z"/><path fill="#a7f0f6" d="M963.3 660.9V721.6H902.6Z"/><path fill="#c4f8fb" d="M962.7 660.9H1023.5L962.7 721.6Z"/><path fill="#c6f9fb" d="M1023.5 660.9V721.6H962.7Z"/><path fill="#d1fcfd" d="M1022.9 660.9H1083.7L1022.9 721.6Z"/><path fill="#d1fcfd" d="M1083.7 660.9V721.6H1022.9Z"/><path fill="#cafafc" d="M1083.1 660.9H1143.8L1083.1 721.6Z"/><path fill="#cefbfc" d="M1143.8 660.9V721.6H1083.1Z"/><path fill="#cdfbfc" d="M1143.2 660.9H1204.0L1143.2 721.6Z"/><path fill="#a3eff5" d="M1204.0 660.9V721.6H1143.2Z"/><path fill="#ccfbfc" d="M1203.4 660.9H1264.2L1203.4 721.6Z"/><path fill="#cefbfd" d="M1264.2 660.9V721.6H1203.4Z"/><path fill="#c9fafc" d="M1263.6 660.9H1324.3L1263.6 721.6Z"/><path fill="#a0edf4" d="M1324.3 660.9V721.6H1263.6Z"/><path fill="#c2f8fa" d="M1323.7 660.9H1384.5L1323.7 721.6Z"/><path fill="#9eeaf2" d="M1384.5 660.9V721.6H1323.7Z"/><path fill="#bbf6f9" d="M1383.9 660.9H1444.7L1383.9 721.6Z"/><path fill="#9ce9f1" d="M1444.7 660.9V721.6H1383.9Z"/><path fill="#9ce8f1" d="M1444.1 660.9H1504.8L1444.1 721.6Z"/><path fill="#9ce8f1" d="M1504.8 660.9V721.6H1444.1Z"/><path fill="#91dce5" d="M1504.2 660.9H1565.0L1504.2 721.6Z"/><path fill="#a7f0f6" d="M1565.0 660.9V721.6H1504.2Z"/><path fill="#91dce5" d="M1564.4 660.9H1625.2L1564.4 721.6Z"/><path fill="#91dce5" d="M1625.2 660.9V721.6H1564.4Z"/><path fill="#a5eff5" d="M1624.6 660.9H1685.4L1624.6 721.6Z"/><path fill="#91dce5" d="M1685.4 660.9V721.6H1624.6Z"/><path fill="#a5eff5" d="M1684.8 660.9H1745.5L1684.8 721.6Z"/><path fill="#91dce5" d="M1745.5 660.9V721.6H1684.8Z"/><path fill="#a4eff5" d="M1744.9 660.9H1805.7L1744.9 721.6Z"/><path fill="#a4eff5" d="M1805.7 660.9V721.6H1744.9Z"/><path fill="#91dbe4" d="M1805.1 660.9H1865.9L1805.1 721.6Z"/><path fill="#90dbe4" d="M1865.9 660.9V721.6H1805.1Z"/><path fill="#91dbe4" d="M1865.3 660.9H1926.0L1865.3 721.6Z"/><path fill="#a2eef5" d="M1926.0 660.9V721.6H1865.3Z"/><path fill="#7ec6cf" d="M0.0 721.0H60.8L0.0 781.6Z"/><path fill="#7ec6cf" d="M60.8 721.0V781.6H0.0Z"/><path fill="#7fc7d0" d="M60.2 721.0H120.9L60.2 781.6Z"/><path fill="#77bec7" d="M120.9 721.0V781.6H60.2Z"/><path fill="#78c0c9" d="M120.3 721.0H181.1L120.3 781.6Z"/><path fill="#88d2db" d="M181.1 721.0V781.6H120.3Z"/><path fill="#92dce5" d="M180.5 721.0H241.3L180.5 781.6Z"/><path fill="#81cad3" d="M241.3 721.0V781.6H180.5Z"/><path fill="#93dee7" d="M240.7 721.0H301.5L240.7 781.6Z"/><path fill="#8bd5de" d="M301.5 721.0V781.6H240.7Z"/><path fill="#9ce8f1" d="M300.9 721.0H361.6L300.9 781.6Z"/><path fill="#9ce8f1" d="M361.6 721.0V781.6H300.9Z"/><path fill="#b0f2f7" d="M361.0 721.0H421.8L361.0 781.6Z"/><path fill="#b0f2f7" d="M421.8 721.0V781.6H361.0Z"/><path fill="#b7f4f8" d="M421.2 721.0H482.0L421.2 781.6Z"/><path fill="#b6f4f8" d="M482.0 721.0V781.6H421.2Z"/><path fill="#bbf6f9" d="M481.4 721.0H542.1L481.4 781.6Z"/><path fill="#baf5f9" d="M542.1 721.0V781.6H481.4Z"/><path fill="#bcf6f9" d="M541.5 721.0H602.3L541.5 781.6Z"/><path fill="#baf5f9" d="M602.3 721.0V781.6H541.5Z"/><path fill="#9ae6ef" d="M601.7 721.0H662.5L601.7 781.6Z"/><path fill="#99e5ee" d="M662.5 721.0V781.6H601.7Z"/><path fill="#a5eff5" d="M661.9 721.0H722.6L661.9 781.6Z"/><path fill="#a3eff5" d="M722.6 721.0V781.6H661.9Z"/><path fill="#a5eff5" d="M722.0 721.0H782.8L722.0 781.6Z"/><path fill="#a3eff5" d="M782.8 721.0V781.6H722.0Z"/><path fill="#9fecf3" d="M782.2 721.0H843.0L782.2 781.6Z"/><path fill="#9febf3" d="M843.0 721.0V781.6H782.2Z"/><path fill="#9de9f2" d="M842.4 721.0H903.2L842.4 781.6Z"/><path fill="#9ce9f1" d="M903.2 721.0V781.6H842.4Z"/><path fill="#a1eef4" d="M902.6 721.0H963.3L902.6 781.6Z"/><path fill="#a1eef4" d="M963.3 721.0V781.6H902.6Z"/><path fill="#d1fcfd" d="M962.7 721.0H1023.5L962.7 781.6Z"/><path fill="#d1fcfd" d="M1023.5 721.0V781.6H962.7Z"/><path fill="#d1fcfd" d="M1022.9 721.0H1083.7L1022.9 781.6Z"/><path fill="#d1fcfd" d="M1083.7 721.0V781.6H1022.9Z"/><path fill="#d0fcfd" d="M1083.1 721.0H1143.8L1083.1 781.6Z"/><path fill="#a7f0f6" d="M1143.8 721.0V781.6H1083.1Z"/><path fill="#a6eff5" d="M1143.2 721.0H1204.0L1143.2 781.6Z"/><path fill="#d1fcfd" d="M1204.0 721.0V781.6H1143.2Z"/><path fill="#bbf6f9" d="M1203.4 721.0H1264.2L1203.4 781.6Z"/><path fill="#a5eff5" d="M1264.2 721.0V781.6H1203.4Z"/><path fill="#cdfbfc" d="M1263.6 721.0H1324.3L1263.6 781.6Z"/><path fill="#a1eef4" d="M1324.3 721.0V781.6H1263.6Z"/><path fill="#c5f9fb" d="M1323.7 721.0H1384.5L1323.7 781.6Z"/><path fill="#c4f8fb" d="M1384.5 721.0V781.6H1323.7Z"/><path fill="#bef7fa" d="M1383.9 721.0H1444.7L1383.9 781.6Z"/><path fill="#9de9f2" d="M1444.7 721.0V781.6H1383.9Z"/><path fill="#baf5f9" d="M1444.1 721.0H1504.8L1444.1 781.6Z"/><path fill="#baf5f9" d="M1504.8 721.0V781.6H1444.1Z"/><path fill="#a7f0f6" d="M1504.2 721.0H1565.0L1504.2 781.6Z"/><path fill="#92dce5" d="M1565.0 721.0V781.6H1504.2Z"/><path fill="#91dce5" d="M1564.4 721.0H1625.2L1564.4 781.6Z"/><path fill="#97e3ec" d="M1625.2 721.0V781.6H1564.4Z"/><path fill="#91dce5" d="M1624.6 721.0H1685.4L1624.6 781.6Z"/><path fill="#a5eff5" d="M1685.4 721.0V781.6H1624.6Z"/><path fill="#91dbe4" d="M1684.8 721.0H1745.5L1684.8 781.6Z"/><path fill="#90dbe4" d="M1745.5 721.0V781.6H1684.8Z"/><path fill="#90dbe4" d="M1744.9 721.0H1805.7L1744.9 781.6Z"/><path fill="#90dae3" d="M1805.7 721.0V781.6H1744.9Z"/><path fill="#a1edf4" d="M1805.1 721.0H1865.9L1805.1 781.6Z"/><path fill="#8ed9e2" d="M1865.9 721.0V781.6H1805.1Z"/><path fill="#a0ecf4" d="M1865.3 721.0H1926.0L1865.3 781.6Z"/><path fill="#9eebf3" d="M1926.0 721.0V781.6H1865.3Z"/><path fill="#74bbc4" d="M0.0 781.0H60.8L0.0 841.7Z"/><path fill="#84ccd5" d="M60.8 781.0V841.7H0.0Z"/><path fill="#75bcc5" d="M60.2 781.0H120.9L60.2 841.7Z"/><path fill="#75bcc5" d="M120.9 781.0V841.7H60.2Z"/><path fill="#8ed9e2" d="M120.3 781.0H181.1L120.3 841.7Z"/><path fill="#76bdc6" d="M181.1 781.0V841.7H120.3Z"/><path fill="#80c8d1" d="M180.5 781.0H241.3L180.5 841.7Z"/><path fill="#90dbe4" d="M241.3 781.0V841.7H180.5Z"/><path fill="#81cad3" d="M240.7 781.0H301.5L240.7 841.7Z"/><path fill="#92dce5" d="M301.5 781.0V841.7H240.7Z"/><path fill="#9be7f0" d="M300.9 781.0H361.6L300.9 841.7Z"/><path fill="#9be7f0" d="M361.6 781.0V841.7H300.9Z"/><path fill="#a7f0f6" d="M361.0 781.0H421.8L361.0 841.7Z"/><path fill="#a7f0f6" d="M421.8 781.0V841.7H361.0Z"/><path fill="#aff2f7" d="M421.2 781.0H482.0L421.2 841.7Z"/><path fill="#9febf3" d="M482.0 781.0V841.7H421.2Z"/><path fill="#9be7f0" d="M481.4 781.0H542.1L481.4 841.7Z"/><path fill="#b2f3f8" d="M542.1 781.0V841.7H481.4Z"/><path fill="#b6f4f8" d="M541.5 781.0H602.3L541.5 841.7Z"/><path fill="#b3f3f8" d="M602.3 781.0V841.7H541.5Z"/><path fill="#8ad3dc" d="M601.7 781.0H662.5L601.7 841.7Z"/><path fill="#b3f3f8" d="M662.5 781.0V841.7H601.7Z"/><path fill="#9be7f0" d="M661.9 781.0H722.6L661.9 841.7Z"/><path fill="#b2f3f8" d="M722.6 781.0V841.7H661.9Z"/><path fill="#b4f4f8" d="M722.0 781.0H782.8L722.0 841.7Z"/><path fill="#9ae6ef" d="M782.8 781.0V841.7H722.0Z"/><path fill="#9be7f0" d="M782.2 781.0H843.0L782.2 841.7Z"/><path fill="#a0ecf4" d="M843.0 781.0V841.7H782.2Z"/><path fill="#9be7f0" d="M842.4 781.0H903.2L842.4 841.7Z"/><path fill="#9ae6ef" d="M903.2 781.0V841.7H842.4Z"/><path fill="#9ce8f1" d="M902.6 781.0H963.3L902.6 841.7Z"/><path fill="#a4eff5" d="M963.3 781.0V841.7H902.6Z"/><path fill="#d1fcfd" d="M962.7 781.0H1023.5L962.7 841.7Z"/><path fill="#d1fcfd" d="M1023.5 781.0V841.7H962.7Z"/><path fill="#d1fcfd" d="M1022.9 781.0H1083.7L1022.9 841.7Z"/><path fill="#d1fcfd" d="M1083.7 781.0V841.7H1022.9Z"/><path fill="#a7f0f6" d="M1083.1 781.0H1143.8L1083.1 841.7Z"/><path fill="#a9f0f6" d="M1143.8 781.0V841.7H1083.1Z"/><path fill="#a9f0f6" d="M1143.2 781.0H1204.0L1143.2 841.7Z"/><path fill="#d1fcfd" d="M1204.0 781.0V841.7H1143.2Z"/><path fill="#d1fcfd" d="M1203.4 781.0H1264.2L1203.4 841.7Z"/><path fill="#a6eff5" d="M1264.2 781.0V841.7H1203.4Z"/><path fill="#a2eef5" d="M1263.6 781.0H1324.3L1263.6 841.7Z"/><path fill="#a1eef4" d="M1324.3 781.0V841.7H1263.6Z"/><path fill="#9fecf3" d="M1323.7 781.0H1384.5L1323.7 841.7Z"/><path fill="#c4f8fb" d="M1384.5 781.0V841.7H1323.7Z"/><path fill="#bff7fa" d="M1383.9 781.0H1444.7L1383.9 841.7Z"/><path fill="#9de9f2" d="M1444.7 781.0V841.7H1383.9Z"/><path fill="#9ce8f1" d="M1444.1 781.0H1504.8L1444.1 841.7Z"/><path fill="#a4eff5" d="M1504.8 781.0V841.7H1444.1Z"/><path fill="#97e3ec" d="M1504.2 781.0H1565.0L1504.2 841.7Z"/><path fill="#9de9f2" d="M1565.0 781.0V841.7H1504.2Z"/><path fill="#a7f0f6" d="M1564.4 781.0H1625.2L1564.4 841.7Z"/><path fill="#91dce5" d="M1625.2 781.0V841.7H1564.4Z"/><path fill="#91dce5" d="M1624.6 781.0H1685.4L1624.6 841.7Z"/><path fill="#96e1ea" d="M1685.4 781.0V841.7H1624.6Z"/><path fill="#96e1ea" d="M1684.8 781.0H1745.5L1684.8 841.7Z"/><path fill="#a0edf4" d="M1745.5 781.0V841.7H1684.8Z"/><path fill="#a0ecf4" d="M1744.9 781.0H1805.7L1744.9 841.7Z"/><path fill="#8dd7e0" d="M1805.7 781.0V841.7H1744.9Z"/><path fill="#9eeaf2" d="M1805.1 781.0H1865.9L1805.1 841.7Z"/><path fill="#9ce8f1" d="M1865.9 781.0V841.7H1805.1Z"/><path fill="#8ad4dd" d="M1865.3 781.0H1926.0L1865.3 841.7Z"/><path fill="#8dd8e1" d="M1926.0 781.0V841.7H1865.3Z"/><path fill="#82cad3" d="M0.0 841.1H60.8L0.0 901.8Z"/><path fill="#82cad3" d="M60.8 841.1V901.8H0.0Z"/><path fill="#83ccd5" d="M60.2 841.1H120.9L60.2 901.8Z"/><path fill="#6bb1ba" d="M120.9 841.1V901.8H60.2Z"/><path fill="#85ced7" d="M120.3 841.1H181.1L120.3 901.8Z"/><path fill="#85ced7" d="M181.1 841.1V901.8H120.3Z"/><path fill="#7ec7d0" d="M180.5 841.1H241.3L180.5 901.8Z"/><path fill="#7fc7d0" d="M241.3 841.1V901.8H180.5Z"/><path fill="#80c9d2" d="M240.7 841.1H301.5L240.7 901.8Z"/><path fill="#91dbe4" d="M301.5 841.1V901.8H240.7Z"/><path fill="#82cbd4" d="M300.9 841.1H361.6L300.9 901.8Z"/><path fill="#9be7f0" d="M361.6 841.1V901.8H300.9Z"/><path fill="#9ae6ef" d="M361.0 841.1H421.8L361.0 901.8Z"/><path fill="#8fd9e2" d="M421.8 841.1V901.8H361.0Z"/><path fill="#9de9f2" d="M421.2 841.1H482.0L421.2 901.8Z"/><path fill="#97e2eb" d="M482.0 841.1V901.8H421.2Z"/><path fill="#87d1da" d="M481.4 841.1H542.1L481.4 901.8Z"/><path fill="#a9f0f6" d="M542.1 841.1V901.8H481.4Z"/><path fill="#88d1da" d="M541.5 841.1H602.3L541.5 901.8Z"/><path fill="#abf1f6" d="M602.3 841.1V901.8H541.5Z"/><path fill="#aef2f7" d="M601.7 841.1H662.5L601.7 901.8Z"/><path fill="#87d0d9" d="M662.5 841.1V901.8H601.7Z"/><path fill="#adf1f7" d="M661.9 841.1H722.6L661.9 901.8Z"/><path fill="#98e3ec" d="M722.6 841.1V901.8H661.9Z"/><path fill="#c2f8fa" d="M722.0 841.1H782.8L722.0 901.8Z"/><path fill="#bff7fa" d="M782.8 841.1V901.8H722.0Z"/><path fill="#c2f8fa" d="M782.2 841.1H843.0L782.2 901.8Z"/><path fill="#bff7fa" d="M843.0 841.1V901.8H782.2Z"/><path fill="#c3f8fb" d="M842.4 841.1H903.2L842.4 901.8Z"/><path fill="#c1f7fa" d="M903.2 841.1V901.8H842.4Z"/><path fill="#c8f9fb" d="M902.6 841.1H963.3L902.6 901.8Z"/><path fill="#9ae6ef" d="M963.3 841.1V901.8H902.6Z"/><path fill="#d1fcfd" d="M962.7 841.1H1023.5L962.7 901.8Z"/><path fill="#d1fcfd" d="M1023.5 841.1V901.8H962.7Z"/><path fill="#b7f4f8" d="M1022.9 841.1H1083.7L1022.9 901.8Z"/><path fill="#d1fcfd" d="M1083.7 841.1V901.8H1022.9Z"/><path fill="#d1fcfd" d="M1083.1 841.1H1143.8L1083.1 901.8Z"/><path fill="#d1fcfd" d="M1143.8 841.1V901.8H1083.1Z"/><path fill="#d1fcfd" d="M1143.2 841.1H1204.0L1143.2 901.8Z"/><path fill="#d1fcfd" d="M1204.0 841.1V901.8H1143.2Z"/><path fill="#a6f0f6" d="M1203.4 841.1H1264.2L1203.4 901.8Z"/><path fill="#d1fcfd" d="M1264.2 841.1V901.8H1203.4Z"/><path fill="#b7f4f8" d="M1263.6 841.1H1324.3L1263.6 901.8Z"/><path fill="#b4f4f8" d="M1324.3 841.1V901.8H1263.6Z"/><path fill="#9fecf3" d="M1323.7 841.1H1384.5L1323.7 901.8Z"/><path fill="#c2f8fa" d="M1384.5 841.1V901.8H1323.7Z"/><path fill="#9de9f2" d="M1383.9 841.1H1444.7L1383.9 901.8Z"/><path fill="#9ce9f1" d="M1444.7 841.1V901.8H1383.9Z"/><path fill="#9ce8f1" d="M1444.1 841.1H1504.8L1444.1 901.8Z"/><path fill="#9be8f1" d="M1504.8 841.1V901.8H1444.1Z"/><path fill="#97e2eb" d="M1504.2 841.1H1565.0L1504.2 901.8Z"/><path fill="#a5eff5" d="M1565.0 841.1V901.8H1504.2Z"/><path fill="#a4eff5" d="M1564.4 841.1H1625.2L1564.4 901.8Z"/><path fill="#a2eef5" d="M1625.2 841.1V901.8H1564.4Z"/><path fill="#90dae3" d="M1624.6 841.1H1685.4L1624.6 901.8Z"/><path fill="#8ed9e2" d="M1685.4 841.1V901.8H1624.6Z"/><path fill="#8ed8e1" d="M1684.8 841.1H1745.5L1684.8 901.8Z"/><path fill="#9de9f2" d="M1745.5 841.1V901.8H1684.8Z"/><path fill="#9ce8f1" d="M1744.9 841.1H1805.7L1744.9 901.8Z"/><path fill="#88d2db" d="M1805.7 841.1V901.8H1744.9Z"/><path fill="#93dee7" d="M1805.1 841.1H1865.9L1805.1 901.8Z"/><path fill="#90dae3" d="M1865.9 841.1V901.8H1805.1Z"/><path fill="#90dae3" d="M1865.3 841.1H1926.0L1865.3 901.8Z"/><path fill="#8dd7e0" d="M1926.0 841.1V901.8H1865.3Z"/><path fill="#70b6bf" d="M0.0 901.2H60.8L0.0 961.9Z"/><path fill="#70b6bf" d="M60.8 901.2V961.9H0.0Z"/><path fill="#81cad3" d="M60.2 901.2H120.9L60.2 961.9Z"/><path fill="#81cad3" d="M120.9 901.2V961.9H60.2Z"/><path fill="#6bb1ba" d="M120.3 901.2H181.1L120.3 961.9Z"/><path fill="#83ccd5" d="M181.1 901.2V961.9H120.3Z"/><path fill="#85ced7" d="M180.5 901.2H241.3L180.5 961.9Z"/><path fill="#85cfd8" d="M241.3 901.2V961.9H180.5Z"/><path fill="#77bec7" d="M240.7 901.2H301.5L240.7 961.9Z"/><path fill="#88d1da" d="M301.5 901.2V961.9H240.7Z"/><path fill="#91dce5" d="M300.9 901.2H361.6L300.9 961.9Z"/><path fill="#82cad3" d="M361.6 901.2V961.9H300.9Z"/><path fill="#98e3ec" d="M361.0 901.2H421.8L361.0 961.9Z"/><path fill="#7bc3cc" d="M421.8 901.2V961.9H361.0Z"/><path fill="#9ae6ef" d="M421.2 901.2H482.0L421.2 961.9Z"/><path fill="#9ae6ef" d="M482.0 901.2V961.9H421.2Z"/><path fill="#85ced7" d="M481.4 901.2H542.1L481.4 961.9Z"/><path fill="#9be7f0" d="M542.1 901.2V961.9H481.4Z"/><path fill="#85ced7" d="M541.5 901.2H602.3L541.5 961.9Z"/><path fill="#85ced7" d="M602.3 901.2V961.9H541.5Z"/><path fill="#a5eff5" d="M601.7 901.2H662.5L601.7 961.9Z"/><path fill="#85ced7" d="M662.5 901.2V961.9H601.7Z"/><path fill="#96e2eb" d="M661.9 901.2H722.6L661.9 961.9Z"/><path fill="#a1eef4" d="M722.6 901.2V961.9H661.9Z"/><path fill="#a3eef5" d="M722.0 901.2H782.8L722.0 961.9Z"/><path fill="#95e0e9" d="M782.8 901.2V961.9H722.0Z"/><path fill="#96e1ea" d="M782.2 901.2H843.0L782.2 961.9Z"/><path fill="#95e0e9" d="M843.0 901.2V961.9H782.2Z"/><path fill="#96e2eb" d="M842.4 901.2H903.2L842.4 961.9Z"/><path fill="#96e1ea" d="M903.2 901.2V961.9H842.4Z"/><path fill="#97e3ec" d="M902.6 901.2H963.3L902.6 961.9Z"/><path fill="#97e3ec" d="M963.3 901.2V961.9H902.6Z"/><path fill="#cbfafc" d="M962.7 901.2H1023.5L962.7 961.9Z"/><path fill="#cdfbfc" d="M1023.5 901.2V961.9H962.7Z"/><path fill="#aef2f7" d="M1022.9 901.2H1083.7L1022.9 961.9Z"/><path fill="#c3f8fb" d="M1083.7 901.2V961.9H1022.9Z"/><path fill="#d1fcfd" d="M1083.1 901.2H1143.8L1083.1 961.9Z"/><path fill="#d1fcfd" d="M1143.8 901.2V961.9H1083.1Z"/><path fill="#a9f0f6" d="M1143.2 901.2H1204.0L1143.2 961.9Z"/><path fill="#bef7fa" d="M1204.0 901.2V961.9H1143.2Z"/><path fill="#a5eff5" d="M1203.4 901.2H1264.2L1203.4 961.9Z"/><path fill="#a4eff5" d="M1264.2 901.2V961.9H1203.4Z"/><path fill="#a0edf4" d="M1263.6 901.2H1324.3L1263.6 961.9Z"/><path fill="#a0edf4" d="M1324.3 901.2V961.9H1263.6Z"/><path fill="#acf1f7" d="M1323.7 901.2H1384.5L1323.7 961.9Z"/><path fill="#bff7fa" d="M1384.5 901.2V961.9H1323.7Z"/><path fill="#baf5f9" d="M1383.9 901.2H1444.7L1383.9 961.9Z"/><path fill="#a2eef5" d="M1444.7 901.2V961.9H1383.9Z"/><path fill="#b5f4f8" d="M1444.1 901.2H1504.8L1444.1 961.9Z"/><path fill="#9ae6ef" d="M1504.8 901.2V961.9H1444.1Z"/><path fill="#90dbe4" d="M1504.2 901.2H1565.0L1504.2 961.9Z"/><path fill="#95e1ea" d="M1565.0 901.2V961.9H1504.2Z"/><path fill="#95e0e9" d="M1564.4 901.2H1625.2L1564.4 961.9Z"/><path fill="#9fecf3" d="M1625.2 901.2V961.9H1564.4Z"/><path fill="#93dee7" d="M1624.6 901.2H1685.4L1624.6 961.9Z"/><path fill="#96e2eb" d="M1685.4 901.2V961.9H1624.6Z"/><path fill="#8fdae3" d="M1684.8 901.2H1745.5L1684.8 961.9Z"/><path fill="#8cd6df" d="M1745.5 901.2V961.9H1684.8Z"/><path fill="#8bd5de" d="M1744.9 901.2H1805.7L1744.9 961.9Z"/><path fill="#88d1da" d="M1805.7 901.2V961.9H1744.9Z"/><path fill="#8dd7e0" d="M1805.1 901.2H1865.9L1805.1 961.9Z"/><path fill="#7fc7d0" d="M1865.9 901.2V961.9H1805.1Z"/><path fill="#84cdd6" d="M1865.3 901.2H1926.0L1865.3 961.9Z"/><path fill="#83cbd4" d="M1926.0 901.2V961.9H1865.3Z"/><path fill="#6eb4bd" d="M0.0 961.3H60.8L0.0 1022.0Z"/><path fill="#76bdc6" d="M60.8 961.3V1022.0H0.0Z"/><path fill="#77bfc8" d="M60.2 961.3H120.9L60.2 1022.0Z"/><path fill="#6fb6bf" d="M120.9 961.3V1022.0H60.2Z"/><path fill="#71b8c1" d="M120.3 961.3H181.1L120.3 1022.0Z"/><path fill="#81cad3" d="M181.1 961.3V1022.0H120.3Z"/><path fill="#7bc3cc" d="M180.5 961.3H241.3L180.5 1022.0Z"/><path fill="#7cc4cd" d="M241.3 961.3V1022.0H180.5Z"/><path fill="#86cfd8" d="M240.7 961.3H301.5L240.7 1022.0Z"/><path fill="#7ec7d0" d="M301.5 961.3V1022.0H240.7Z"/><path fill="#88d2db" d="M300.9 961.3H361.6L300.9 1022.0Z"/><path fill="#71b7c0" d="M361.6 961.3V1022.0H300.9Z"/><path fill="#78bfc8" d="M361.0 961.3H421.8L361.0 1022.0Z"/><path fill="#94dfe8" d="M421.8 961.3V1022.0H361.0Z"/><path fill="#97e2eb" d="M421.2 961.3H482.0L421.2 1022.0Z"/><path fill="#96e2eb" d="M482.0 961.3V1022.0H421.2Z"/><path fill="#7cc4cd" d="M481.4 961.3H542.1L481.4 1022.0Z"/><path fill="#98e3ec" d="M542.1 961.3V1022.0H481.4Z"/><path fill="#82cbd4" d="M541.5 961.3H602.3L541.5 1022.0Z"/><path fill="#82cad3" d="M602.3 961.3V1022.0H541.5Z"/><path fill="#83ccd5" d="M601.7 961.3H662.5L601.7 1022.0Z"/><path fill="#82cad3" d="M662.5 961.3V1022.0H601.7Z"/><path fill="#8ed8e1" d="M661.9 961.3H722.6L661.9 1022.0Z"/><path fill="#93dee7" d="M722.6 961.3V1022.0H661.9Z"/><path fill="#aef2f7" d="M722.0 961.3H782.8L722.0 1022.0Z"/><path fill="#aaf1f6" d="M782.8 961.3V1022.0H722.0Z"/><path fill="#aef2f7" d="M782.2 961.3H843.0L782.2 1022.0Z"/><path fill="#aaf1f6" d="M843.0 961.3V1022.0H782.2Z"/><path fill="#aff2f7" d="M842.4 961.3H903.2L842.4 1022.0Z"/><path fill="#acf1f7" d="M903.2 961.3V1022.0H842.4Z"/><path fill="#95e0e9" d="M902.6 961.3H963.3L902.6 1022.0Z"/><path fill="#9ae6ef" d="M963.3 961.3V1022.0H902.6Z"/><path fill="#c0f7fa" d="M962.7 961.3H1023.5L962.7 1022.0Z"/><path fill="#9eebf3" d="M1023.5 961.3V1022.0H962.7Z"/><path fill="#cffbfd" d="M1022.9 961.3H1083.7L1022.9 1022.0Z"/><path fill="#b7f4f8" d="M1083.7 961.3V1022.0H1022.9Z"/><path fill="#d1fcfd" d="M1083.1 961.3H1143.8L1083.1 1022.0Z"/><path fill="#d1fcfd" d="M1143.8 961.3V1022.0H1083.1Z"/><path fill="#a8f0f6" d="M1143.2 961.3H1204.0L1143.2 1022.0Z"/><path fill="#d1fcfd" d="M1204.0 961.3V1022.0H1143.2Z"/><path fill="#cffcfd" d="M1203.4 961.3H1264.2L1203.4 1022.0Z"/><path fill="#a1eef5" d="M1264.2 961.3V1022.0H1203.4Z"/><path fill="#c8fafc" d="M1263.6 961.3H1324.3L1263.6 1022.0Z"/><path fill="#9fecf3" d="M1324.3 961.3V1022.0H1263.6Z"/><path fill="#bff7fa" d="M1323.7 961.3H1384.5L1323.7 1022.0Z"/><path fill="#9de9f2" d="M1384.5 961.3V1022.0H1323.7Z"/><path fill="#a1eef5" d="M1383.9 961.3H1444.7L1383.9 1022.0Z"/><path fill="#a0edf4" d="M1444.7 961.3V1022.0H1383.9Z"/><path fill="#9ae6ef" d="M1444.1 961.3H1504.8L1444.1 1022.0Z"/><path fill="#94dfe8" d="M1504.8 961.3V1022.0H1444.1Z"/><path fill="#94e0e9" d="M1504.2 961.3H1565.0L1504.2 1022.0Z"/><path fill="#8ed8e1" d="M1565.0 961.3V1022.0H1504.2Z"/><path fill="#93dee7" d="M1564.4 961.3H1625.2L1564.4 1022.0Z"/><path fill="#91dbe4" d="M1625.2 961.3V1022.0H1564.4Z"/><path fill="#84ccd5" d="M1624.6 961.3H1685.4L1624.6 1022.0Z"/><path fill="#92dde6" d="M1685.4 961.3V1022.0H1624.6Z"/><path fill="#90dae3" d="M1684.8 961.3H1745.5L1684.8 1022.0Z"/><path fill="#81cad3" d="M1745.5 961.3V1022.0H1684.8Z"/><path fill="#86cfd8" d="M1744.9 961.3H1805.7L1744.9 1022.0Z"/><path fill="#83ccd5" d="M1805.7 961.3V1022.0H1744.9Z"/><path fill="#7dc5ce" d="M1805.1 961.3H1865.9L1805.1 1022.0Z"/><path fill="#87d0d9" d="M1865.9 961.3V1022.0H1805.1Z"/><path fill="#7bc3cc" d="M1865.3 961.3H1926.0L1865.3 1022.0Z"/><path fill="#7ac2cb" d="M1926.0 961.3V1022.0H1865.3Z"/><path fill="#6cb2bb" d="M0.0 1021.4H60.8L0.0 1082.0Z"/><path fill="#74bbc4" d="M60.8 1021.4V1082.0H0.0Z"/><path fill="#76bdc6" d="M60.2 1021.4H120.9L60.2 1082.0Z"/><path fill="#76bdc6" d="M120.9 1021.4V1082.0H60.2Z"/><path fill="#77bfc8" d="M120.3 1021.4H181.1L120.3 1082.0Z"/><path fill="#70b6bf" d="M181.1 1021.4V1082.0H120.3Z"/><path fill="#82cad3" d="M180.5 1021.4H241.3L180.5 1082.0Z"/><path fill="#7ac2cb" d="M241.3 1021.4V1082.0H180.5Z"/><path fill="#7cc4cd" d="M240.7 1021.4H301.5L240.7 1082.0Z"/><path fill="#6db3bc" d="M301.5 1021.4V1082.0H240.7Z"/><path fill="#87d1da" d="M300.9 1021.4H361.6L300.9 1082.0Z"/><path fill="#88d1da" d="M361.6 1021.4V1082.0H300.9Z"/><path fill="#91dbe4" d="M361.0 1021.4H421.8L361.0 1082.0Z"/><path fill="#90dbe4" d="M421.8 1021.4V1082.0H361.0Z"/><path fill="#7cc4cd" d="M421.2 1021.4H482.0L421.2 1082.0Z"/><path fill="#8dd7e0" d="M482.0 1021.4V1082.0H421.2Z"/><path fill="#78c0c9" d="M481.4 1021.4H542.1L481.4 1082.0Z"/><path fill="#8ed9e2" d="M542.1 1021.4V1082.0H481.4Z"/><path fill="#7fc8d1" d="M541.5 1021.4H602.3L541.5 1082.0Z"/><path fill="#78c0c9" d="M602.3 1021.4V1082.0H541.5Z"/><path fill="#85cfd8" d="M601.7 1021.4H662.5L601.7 1082.0Z"/><path fill="#7fc7d0" d="M662.5 1021.4V1082.0H601.7Z"/><path fill="#91dbe4" d="M661.9 1021.4H722.6L661.9 1082.0Z"/><path fill="#95e1ea" d="M722.6 1021.4V1082.0H661.9Z"/><path fill="#a3eff5" d="M722.0 1021.4H782.8L722.0 1082.0Z"/><path fill="#8ad3dc" d="M782.8 1021.4V1082.0H722.0Z"/><path fill="#a2eef5" d="M782.2 1021.4H843.0L782.2 1082.0Z"/><path fill="#8fdae3" d="M843.0 1021.4V1082.0H782.2Z"/><path fill="#96e2eb" d="M842.4 1021.4H903.2L842.4 1082.0Z"/><path fill="#95e1ea" d="M903.2 1021.4V1082.0H842.4Z"/><path fill="#97e3ec" d="M902.6 1021.4H963.3L902.6 1082.0Z"/><path fill="#8cd6df" d="M963.3 1021.4V1082.0H902.6Z"/><path fill="#b4f3f8" d="M962.7 1021.4H1023.5L962.7 1082.0Z"/><path fill="#b3f3f8" d="M1023.5 1021.4V1082.0H962.7Z"/><path fill="#c0f7fa" d="M1022.9 1021.4H1083.7L1022.9 1082.0Z"/><path fill="#bef6fa" d="M1083.7 1021.4V1082.0H1022.9Z"/><path fill="#bcf6f9" d="M1083.1 1021.4H1143.8L1083.1 1082.0Z"/><path fill="#bcf6f9" d="M1143.8 1021.4V1082.0H1083.1Z"/><path fill="#d1fcfd" d="M1143.2 1021.4H1204.0L1143.2 1082.0Z"/><path fill="#a4eff5" d="M1204.0 1021.4V1082.0H1143.2Z"/><path fill="#b6f4f8" d="M1203.4 1021.4H1264.2L1203.4 1082.0Z"/><path fill="#a0edf4" d="M1264.2 1021.4V1082.0H1203.4Z"/><path fill="#9fecf3" d="M1263.6 1021.4H1324.3L1263.6 1082.0Z"/><path fill="#9eebf3" d="M1324.3 1021.4V1082.0H1263.6Z"/><path fill="#97e2eb" d="M1323.7 1021.4H1384.5L1323.7 1082.0Z"/><path fill="#9ce8f1" d="M1384.5 1021.4V1082.0H1323.7Z"/><path fill="#a0edf4" d="M1383.9 1021.4H1444.7L1383.9 1082.0Z"/><path fill="#9ae6ef" d="M1444.7 1021.4V1082.0H1383.9Z"/><path fill="#99e5ee" d="M1444.1 1021.4H1504.8L1444.1 1082.0Z"/><path fill="#92dde6" d="M1504.8 1021.4V1082.0H1444.1Z"/><path fill="#93dee7" d="M1504.2 1021.4H1565.0L1504.2 1082.0Z"/><path fill="#86d0d9" d="M1565.0 1021.4V1082.0H1504.2Z"/><path fill="#90dbe4" d="M1564.4 1021.4H1625.2L1564.4 1082.0Z"/><path fill="#8ed8e1" d="M1625.2 1021.4V1082.0H1564.4Z"/><path fill="#8bd5de" d="M1624.6 1021.4H1685.4L1624.6 1082.0Z"/><path fill="#7dc5ce" d="M1685.4 1021.4V1082.0H1624.6Z"/><path fill="#86cfd8" d="M1684.8 1021.4H1745.5L1684.8 1082.0Z"/><path fill="#7dc6cf" d="M1745.5 1021.4V1082.0H1684.8Z"/><path fill="#82cad3" d="M1744.9 1021.4H1805.7L1744.9 1082.0Z"/><path fill="#80c9d2" d="M1805.7 1021.4V1082.0H1744.9Z"/><path fill="#7ac2cb" d="M1805.1 1021.4H1865.9L1805.1 1082.0Z"/><path fill="#74bbc4" d="M1865.9 1021.4V1082.0H1805.1Z"/><path fill="#79c1ca" d="M1865.3 1021.4H1926.0L1865.3 1082.0Z"/><path fill="#79c1ca" d="M1926.0 1021.4V1082.0H1865.3Z"/><path d="M60.2 0V1080M120.3 0V1080M180.5 0V1080M240.7 0V1080M300.9 0V1080M361.0 0V1080M421.2 0V1080M481.4 0V1080M541.5 0V1080M601.7 0V1080M661.9 0V1080M722.0 0V1080M782.2 0V1080M842.4 0V1080M902.6 0V1080M962.7 0V1080M1022.9 0V1080M1083.1 0V1080M1143.2 0V1080M1203.4 0V1080M1263.6 0V1080M1323.7 0V1080M1383.9 0V1080M1444.1 0V1080M1504.2 0V1080M1564.4 0V1080M1624.6 0V1080M1684.8 0V1080M1744.9 0V1080M1805.1 0V1080M1865.3 0V1080M0 60.1H1920M0 120.2H1920M0 180.2H1920M0 240.3H1920M0 300.4H1920M0 360.5H1920M0 420.6H1920M0 480.6H1920M0 540.7H1920M0 600.8H1920M0 660.9H1920M0 721.0H1920M0 781.0H1920M0 841.1H1920M0 901.2H1920M0 961.3H1920M0 1021.4H1920M0.0 60.1L60.2 0.0M60.2 60.1L120.3 0.0M120.3 60.1L180.5 0.0M180.5 60.1L240.7 0.0M240.7 60.1L300.9 0.0M300.9 60.1L361.0 0.0M361.0 60.1L421.2 0.0M421.2 60.1L481.4 0.0M481.4 60.1L541.5 0.0M541.5 60.1L601.7 0.0M601.7 60.1L661.9 0.0M661.9 60.1L722.0 0.0M722.0 60.1L782.2 0.0M782.2 60.1L842.4 0.0M842.4 60.1L902.6 0.0M902.6 60.1L962.7 0.0M962.7 60.1L1022.9 0.0M1022.9 60.1L1083.1 0.0M1083.1 60.1L1143.2 0.0M1143.2 60.1L1203.4 0.0M1203.4 60.1L1263.6 0.0M1263.6 60.1L1323.7 0.0M1323.7 60.1L1383.9 0.0M1383.9 60.1L1444.1 0.0M1444.1 60.1L1504.2 0.0M1504.2 60.1L1564.4 0.0M1564.4 60.1L1624.6 0.0M1624.6 60.1L1684.8 0.0M1684.8 60.1L1744.9 0.0M1744.9 60.1L1805.1 0.0M1805.1 60.1L1865.3 0.0M1865.3 60.1L1925.4 0.0M0.0 120.2L60.2 60.1M60.2 120.2L120.3 60.1M120.3 120.2L180.5 60.1M180.5 120.2L240.7 60.1M240.7 120.2L300.9 60.1M300.9 120.2L361.0 60.1M361.0 120.2L421.2 60.1M421.2 120.2L481.4 60.1M481.4 120.2L541.5 60.1M541.5 120.2L601.7 60.1M601.7 120.2L661.9 60.1M661.9 120.2L722.0 60.1M722.0 120.2L782.2 60.1M782.2 120.2L842.4 60.1M842.4 120.2L902.6 60.1M902.6 120.2L962.7 60.1M962.7 120.2L1022.9 60.1M1022.9 120.2L1083.1 60.1M1083.1 120.2L1143.2 60.1M1143.2 120.2L1203.4 60.1M1203.4 120.2L1263.6 60.1M1263.6 120.2L1323.7 60.1M1323.7 120.2L1383.9 60.1M1383.9 120.2L1444.1 60.1M1444.1 120.2L1504.2 60.1M1504.2 120.2L1564.4 60.1M1564.4 120.2L1624.6 60.1M1624.6 120.2L1684.8 60.1M1684.8 120.2L1744.9 60.1M1744.9 120.2L1805.1 60.1M1805.1 120.2L1865.3 60.1M1865.3 120.2L1925.4 60.1M0.0 180.2L60.2 120.2M60.2 180.2L120.3 120.2M120.3 180.2L180.5 120.2M180.5 180.2L240.7 120.2M240.7 180.2L300.9 120.2M300.9 180.2L361.0 120.2M361.0 180.2L421.2 120.2M421.2 180.2L481.4 120.2M481.4 180.2L541.5 120.2M541.5 180.2L601.7 120.2M601.7 180.2L661.9 120.2M661.9 180.2L722.0 120.2M722.0 180.2L782.2 120.2M782.2 180.2L842.4 120.2M842.4 180.2L902.6 120.2M902.6 180.2L962.7 120.2M962.7 180.2L1022.9 120.2M1022.9 180.2L1083.1 120.2M1083.1 180.2L1143.2 120.2M1143.2 180.2L1203.4 120.2M1203.4 180.2L1263.6 120.2M1263.6 180.2L1323.7 120.2M1323.7 180.2L1383.9 120.2M1383.9 180.2L1444.1 120.2M1444.1 180.2L1504.2 120.2M1504.2 180.2L1564.4 120.2M1564.4 180.2L1624.6 120.2M1624.6 180.2L1684.8 120.2M1684.8 180.2L1744.9 120.2M1744.9 180.2L1805.1 120.2M1805.1 180.2L1865.3 120.2M1865.3 180.2L1925.4 120.2M0.0 240.3L60.2 180.2M60.2 240.3L120.3 180.2M120.3 240.3L180.5 180.2M180.5 240.3L240.7 180.2M240.7 240.3L300.9 180.2M300.9 240.3L361.0 180.2M361.0 240.3L421.2 180.2M421.2 240.3L481.4 180.2M481.4 240.3L541.5 180.2M541.5 240.3L601.7 180.2M601.7 240.3L661.9 180.2M661.9 240.3L722.0 180.2M722.0 240.3L782.2 180.2M782.2 240.3L842.4 180.2M842.4 240.3L902.6 180.2M902.6 240.3L962.7 180.2M962.7 240.3L1022.9 180.2M1022.9 240.3L1083.1 180.2M1083.1 240.3L1143.2 180.2M1143.2 240.3L1203.4 180.2M1203.4 240.3L1263.6 180.2M1263.6 240.3L1323.7 180.2M1323.7 240.3L1383.9 180.2M1383.9 240.3L1444.1 180.2M1444.1 240.3L1504.2 180.2M1504.2 240.3L1564.4 180.2M1564.4 240.3L1624.6 180.2M1624.6 240.3L1684.8 180.2M1684.8 240.3L1744.9 180.2M1744.9 240.3L1805.1 180.2M1805.1 240.3L1865.3 180.2M1865.3 240.3L1925.4 180.2M0.0 300.4L60.2 240.3M60.2 300.4L120.3 240.3M120.3 300.4L180.5 240.3M180.5 300.4L240.7 240.3M240.7 300.4L300.9 240.3M300.9 300.4L361.0 240.3M361.0 300.4L421.2 240.3M421.2 300.4L481.4 240.3M481.4 300.4L541.5 240.3M541.5 300.4L601.7 240.3M601.7 300.4L661.9 240.3M661.9 300.4L722.0 240.3M722.0 300.4L782.2 240.3M782.2 300.4L842.4 240.3M842.4 300.4L902.6 240.3M902.6 300.4L962.7 240.3M962.7 300.4L1022.9 240.3M1022.9 300.4L1083.1 240.3M1083.1 300.4L1143.2 240.3M1143.2 300.4L1203.4 240.3M1203.4 300.4L1263.6 240.3M1263.6 300.4L1323.7 240.3M1323.7 300.4L1383.9 240.3M1383.9 300.4L1444.1 240.3M1444.1 300.4L1504.2 240.3M1504.2 300.4L1564.4 240.3M1564.4 300.4L1624.6 240.3M1624.6 300.4L1684.8 240.3M1684.8 300.4L1744.9 240.3M1744.9 300.4L1805.1 240.3M1805.1 300.4L1865.3 240.3M1865.3 300.4L1925.4 240.3M0.0 360.5L60.2 300.4M60.2 360.5L120.3 300.4M120.3 360.5L180.5 300.4M180.5 360.5L240.7 300.4M240.7 360.5L300.9 300.4M300.9 360.5L361.0 300.4M361.0 360.5L421.2 300.4M421.2 360.5L481.4 300.4M481.4 360.5L541.5 300.4M541.5 360.5L601.7 300.4M601.7 360.5L661.9 300.4M661.9 360.5L722.0 300.4M722.0 360.5L782.2 300.4M782.2 360.5L842.4 300.4M842.4 360.5L902.6 300.4M902.6 360.5L962.7 300.4M962.7 360.5L1022.9 300.4M1022.9 360.5L1083.1 300.4M1083.1 360.5L1143.2 300.4M1143.2 360.5L1203.4 300.4M1203.4 360.5L1263.6 300.4M1263.6 360.5L1323.7 300.4M1323.7 360.5L1383.9 300.4M1383.9 360.5L1444.1 300.4M1444.1 360.5L1504.2 300.4M1504.2 360.5L1564.4 300.4M1564.4 360.5L1624.6 300.4M1624.6 360.5L1684.8 300.4M1684.8 360.5L1744.9 300.4M1744.9 360.5L1805.1 300.4M1805.1 360.5L1865.3 300.4M1865.3 360.5L1925.4 300.4M0.0 420.6L60.2 360.5M60.2 420.6L120.3 360.5M120.3 420.6L180.5 360.5M180.5 420.6L240.7 360.5M240.7 420.6L300.9 360.5M300.9 420.6L361.0 360.5M361.0 420.6L421.2 360.5M421.2 420.6L481.4 360.5M481.4 420.6L541.5 360.5M541.5 420.6L601.7 360.5M601.7 420.6L661.9 360.5M661.9 420.6L722.0 360.5M722.0 420.6L782.2 360.5M782.2 420.6L842.4 360.5M842.4 420.6L902.6 360.5M902.6 420.6L962.7 360.5M962.7 420.6L1022.9 360.5M1022.9 420.6L1083.1 360.5M1083.1 420.6L1143.2 360.5M1143.2 420.6L1203.4 360.5M1203.4 420.6L1263.6 360.5M1263.6 420.6L1323.7 360.5M1323.7 420.6L1383.9 360.5M1383.9 420.6L1444.1 360.5M1444.1 420.6L1504.2 360.5M1504.2 420.6L1564.4 360.5M1564.4 420.6L1624.6 360.5M1624.6 420.6L1684.8 360.5M1684.8 420.6L1744.9 360.5M1744.9 420.6L1805.1 360.5M1805.1 420.6L1865.3 360.5M1865.3 420.6L1925.4 360.5M0.0 480.6L60.2 420.6M60.2 480.6L120.3 420.6M120.3 480.6L180.5 420.6M180.5 480.6L240.7 420.6M240.7 480.6L300.9 420.6M300.9 480.6L361.0 420.6M361.0 480.6L421.2 420.6M421.2 480.6L481.4 420.6M481.4 480.6L541.5 420.6M541.5 480.6L601.7 420.6M601.7 480.6L661.9 420.6M661.9 480.6L722.0 420.6M722.0 480.6L782.2 420.6M782.2 480.6L842.4 420.6M842.4 480.6L902.6 420.6M902.6 480.6L962.7 420.6M962.7 480.6L1022.9 420.6M1022.9 480.6L1083.1 420.6M1083.1 480.6L1143.2 420.6M1143.2 480.6L1203.4 420.6M1203.4 480.6L1263.6 420.6M1263.6 480.6L1323.7 420.6M1323.7 480.6L1383.9 420.6M1383.9 480.6L1444.1 420.6M1444.1 480.6L1504.2 420.6M1504.2 480.6L1564.4 420.6M1564.4 480.6L1624.6 420.6M1624.6 480.6L1684.8 420.6M1684.8 480.6L1744.9 420.6M1744.9 480.6L1805.1 420.6M1805.1 480.6L1865.3 420.6M1865.3 480.6L1925.4 420.6M0.0 540.7L60.2 480.6M60.2 540.7L120.3 480.6M120.3 540.7L180.5 480.6M180.5 540.7L240.7 480.6M240.7 540.7L300.9 480.6M300.9 540.7L361.0 480.6M361.0 540.7L421.2 480.6M421.2 540.7L481.4 480.6M481.4 540.7L541.5 480.6M541.5 540.7L601.7 480.6M601.7 540.7L661.9 480.6M661.9 540.7L722.0 480.6M722.0 540.7L782.2 480.6M782.2 540.7L842.4 480.6M842.4 540.7L902.6 480.6M902.6 540.7L962.7 480.6M962.7 540.7L1022.9 480.6M1022.9 540.7L1083.1 480.6M1083.1 540.7L1143.2 480.6M1143.2 540.7L1203.4 480.6M1203.4 540.7L1263.6 480.6M1263.6 540.7L1323.7 480.6M1323.7 540.7L1383.9 480.6M1383.9 540.7L1444.1 480.6M1444.1 540.7L1504.2 480.6M1504.2 540.7L1564.4 480.6M1564.4 540.7L1624.6 480.6M1624.6 540.7L1684.8 480.6M1684.8 540.7L1744.9 480.6M1744.9 540.7L1805.1 480.6M1805.1 540.7L1865.3 480.6M1865.3 540.7L1925.4 480.6M0.0 600.8L60.2 540.7M60.2 600.8L120.3 540.7M120.3 600.8L180.5 540.7M180.5 600.8L240.7 540.7M240.7 600.8L300.9 540.7M300.9 600.8L361.0 540.7M361.0 600.8L421.2 540.7M421.2 600.8L481.4 540.7M481.4 600.8L541.5 540.7M541.5 600.8L601.7 540.7M601.7 600.8L661.9 540.7M661.9 600.8L722.0 540.7M722.0 600.8L782.2 540.7M782.2 600.8L842.4 540.7M842.4 600.8L902.6 540.7M902.6 600.8L962.7 540.7M962.7 600.8L1022.9 540.7M1022.9 600.8L1083.1 540.7M1083.1 600.8L1143.2 540.7M1143.2 600.8L1203.4 540.7M1203.4 600.8L1263.6 540.7M1263.6 600.8L1323.7 540.7M1323.7 600.8L1383.9 540.7M1383.9 600.8L1444.1 540.7M1444.1 600.8L1504.2 540.7M1504.2 600.8L1564.4 540.7M1564.4 600.8L1624.6 540.7M1624.6 600.8L1684.8 540.7M1684.8 600.8L1744.9 540.7M1744.9 600.8L1805.1 540.7M1805.1 600.8L1865.3 540.7M1865.3 600.8L1925.4 540.7M0.0 660.9L60.2 600.8M60.2 660.9L120.3 600.8M120.3 660.9L180.5 600.8M180.5 660.9L240.7 600.8M240.7 660.9L300.9 600.8M300.9 660.9L361.0 600.8M361.0 660.9L421.2 600.8M421.2 660.9L481.4 600.8M481.4 660.9L541.5 600.8M541.5 660.9L601.7 600.8M601.7 660.9L661.9 600.8M661.9 660.9L722.0 600.8M722.0 660.9L782.2 600.8M782.2 660.9L842.4 600.8M842.4 660.9L902.6 600.8M902.6 660.9L962.7 600.8M962.7 660.9L1022.9 600.8M1022.9 660.9L1083.1 600.8M1083.1 660.9L1143.2 600.8M1143.2 660.9L1203.4 600.8M1203.4 660.9L1263.6 600.8M1263.6 660.9L1323.7 600.8M1323.7 660.9L1383.9 600.8M1383.9 660.9L1444.1 600.8M1444.1 660.9L1504.2 600.8M1504.2 660.9L1564.4 600.8M1564.4 660.9L1624.6 600.8M1624.6 660.9L1684.8 600.8M1684.8 660.9L1744.9 600.8M1744.9 660.9L1805.1 600.8M1805.1 660.9L1865.3 600.8M1865.3 660.9L1925.4 600.8M0.0 721.0L60.2 660.9M60.2 721.0L120.3 660.9M120.3 721.0L180.5 660.9M180.5 721.0L240.7 660.9M240.7 721.0L300.9 660.9M300.9 721.0L361.0 660.9M361.0 721.0L421.2 660.9M421.2 721.0L481.4 660.9M481.4 721.0L541.5 660.9M541.5 721.0L601.7 660.9M601.7 721.0L661.9 660.9M661.9 721.0L722.0 660.9M722.0 721.0L782.2 660.9M782.2 721.0L842.4 660.9M842.4 721.0L902.6 660.9M902.6 721.0L962.7 660.9M962.7 721.0L1022.9 660.9M1022.9 721.0L1083.1 660.9M1083.1 721.0L1143.2 660.9M1143.2 721.0L1203.4 660.9M1203.4 721.0L1263.6 660.9M1263.6 721.0L1323.7 660.9M1323.7 721.0L1383.9 660.9M1383.9 721.0L1444.1 660.9M1444.1 721.0L1504.2 660.9M1504.2 721.0L1564.4 660.9M1564.4 721.0L1624.6 660.9M1624.6 721.0L1684.8 660.9M1684.8 721.0L1744.9 660.9M1744.9 721.0L1805.1 660.9M1805.1 721.0L1865.3 660.9M1865.3 721.0L1925.4 660.9M0.0 781.0L60.2 721.0M60.2 781.0L120.3 721.0M120.3 781.0L180.5 721.0M180.5 781.0L240.7 721.0M240.7 781.0L300.9 721.0M300.9 781.0L361.0 721.0M361.0 781.0L421.2 721.0M421.2 781.0L481.4 721.0M481.4 781.0L541.5 721.0M541.5 781.0L601.7 721.0M601.7 781.0L661.9 721.0M661.9 781.0L722.0 721.0M722.0 781.0L782.2 721.0M782.2 781.0L842.4 721.0M842.4 781.0L902.6 721.0M902.6 781.0L962.7 721.0M962.7 781.0L1022.9 721.0M1022.9 781.0L1083.1 721.0M1083.1 781.0L1143.2 721.0M1143.2 781.0L1203.4 721.0M1203.4 781.0L1263.6 721.0M1263.6 781.0L1323.7 721.0M1323.7 781.0L1383.9 721.0M1383.9 781.0L1444.1 721.0M1444.1 781.0L1504.2 721.0M1504.2 781.0L1564.4 721.0M1564.4 781.0L1624.6 721.0M1624.6 781.0L1684.8 721.0M1684.8 781.0L1744.9 721.0M1744.9 781.0L1805.1 721.0M1805.1 781.0L1865.3 721.0M1865.3 781.0L1925.4 721.0M0.0 841.1L60.2 781.0M60.2 841.1L120.3 781.0M120.3 841.1L180.5 781.0M180.5 841.1L240.7 781.0M240.7 841.1L300.9 781.0M300.9 841.1L361.0 781.0M361.0 841.1L421.2 781.0M421.2 841.1L481.4 781.0M481.4 841.1L541.5 781.0M541.5 841.1L601.7 781.0M601.7 841.1L661.9 781.0M661.9 841.1L722.0 781.0M722.0 841.1L782.2 781.0M782.2 841.1L842.4 781.0M842.4 841.1L902.6 781.0M902.6 841.1L962.7 781.0M962.7 841.1L1022.9 781.0M1022.9 841.1L1083.1 781.0M1083.1 841.1L1143.2 781.0M1143.2 841.1L1203.4 781.0M1203.4 841.1L1263.6 781.0M1263.6 841.1L1323.7 781.0M1323.7 841.1L1383.9 781.0M1383.9 841.1L1444.1 781.0M1444.1 841.1L1504.2 781.0M1504.2 841.1L1564.4 781.0M1564.4 841.1L1624.6 781.0M1624.6 841.1L1684.8 781.0M1684.8 841.1L1744.9 781.0M1744.9 841.1L1805.1 781.0M1805.1 841.1L1865.3 781.0M1865.3 841.1L1925.4 781.0M0.0 901.2L60.2 841.1M60.2 901.2L120.3 841.1M120.3 901.2L180.5 841.1M180.5 901.2L240.7 841.1M240.7 901.2L300.9 841.1M300.9 901.2L361.0 841.1M361.0 901.2L421.2 841.1M421.2 901.2L481.4 841.1M481.4 901.2L541.5 841.1M541.5 901.2L601.7 841.1M601.7 901.2L661.9 841.1M661.9 901.2L722.0 841.1M722.0 901.2L782.2 841.1M782.2 901.2L842.4 841.1M842.4 901.2L902.6 841.1M902.6 901.2L962.7 841.1M962.7 901.2L1022.9 841.1M1022.9 901.2L1083.1 841.1M1083.1 901.2L1143.2 841.1M1143.2 901.2L1203.4 841.1M1203.4 901.2L1263.6 841.1M1263.6 901.2L1323.7 841.1M1323.7 901.2L1383.9 841.1M1383.9 901.2L1444.1 841.1M1444.1 901.2L1504.2 841.1M1504.2 901.2L1564.4 841.1M1564.4 901.2L1624.6 841.1M1624.6 901.2L1684.8 841.1M1684.8 901.2L1744.9 841.1M1744.9 901.2L1805.1 841.1M1805.1 901.2L1865.3 841.1M1865.3 901.2L1925.4 841.1M0.0 961.3L60.2 901.2M60.2 961.3L120.3 901.2M120.3 961.3L180.5 901.2M180.5 961.3L240.7 901.2M240.7 961.3L300.9 901.2M300.9 961.3L361.0 901.2M361.0 961.3L421.2 901.2M421.2 961.3L481.4 901.2M481.4 961.3L541.5 901.2M541.5 961.3L601.7 901.2M601.7 961.3L661.9 901.2M661.9 961.3L722.0 901.2M722.0 961.3L782.2 901.2M782.2 961.3L842.4 901.2M842.4 961.3L902.6 901.2M902.6 961.3L962.7 901.2M962.7 961.3L1022.9 901.2M1022.9 961.3L1083.1 901.2M1083.1 961.3L1143.2 901.2M1143.2 961.3L1203.4 901.2M1203.4 961.3L1263.6 901.2M1263.6 961.3L1323.7 901.2M1323.7 961.3L1383.9 901.2M1383.9 961.3L1444.1 901.2M1444.1 961.3L1504.2 901.2M1504.2 961.3L1564.4 901.2M1564.4 961.3L1624.6 901.2M1624.6 961.3L1684.8 901.2M1684.8 961.3L1744.9 901.2M1744.9 961.3L1805.1 901.2M1805.1 961.3L1865.3 901.2M1865.3 961.3L1925.4 901.2M0.0 1021.4L60.2 961.3M60.2 1021.4L120.3 961.3M120.3 1021.4L180.5 961.3M180.5 1021.4L240.7 961.3M240.7 1021.4L300.9 961.3M300.9 1021.4L361.0 961.3M361.0 1021.4L421.2 961.3M421.2 1021.4L481.4 961.3M481.4 1021.4L541.5 961.3M541.5 1021.4L601.7 961.3M601.7 1021.4L661.9 961.3M661.9 1021.4L722.0 961.3M722.0 1021.4L782.2 961.3M782.2 1021.4L842.4 961.3M842.4 1021.4L902.6 961.3M902.6 1021.4L962.7 961.3M962.7 1021.4L1022.9 961.3M1022.9 1021.4L1083.1 961.3M1083.1 1021.4L1143.2 961.3M1143.2 1021.4L1203.4 961.3M1203.4 1021.4L1263.6 961.3M1263.6 1021.4L1323.7 961.3M1323.7 1021.4L1383.9 961.3M1383.9 1021.4L1444.1 961.3M1444.1 1021.4L1504.2 961.3M1504.2 1021.4L1564.4 961.3M1564.4 1021.4L1624.6 961.3M1624.6 1021.4L1684.8 961.3M1684.8 1021.4L1744.9 961.3M1744.9 1021.4L1805.1 961.3M1805.1 1021.4L1865.3 961.3M1865.3 1021.4L1925.4 961.3M0.0 1081.4L60.2 1021.4M60.2 1081.4L120.3 1021.4M120.3 1081.4L180.5 1021.4M180.5 1081.4L240.7 1021.4M240.7 1081.4L300.9 1021.4M300.9 1081.4L361.0 1021.4M361.0 1081.4L421.2 1021.4M421.2 1081.4L481.4 1021.4M481.4 1081.4L541.5 1021.4M541.5 1081.4L601.7 1021.4M601.7 1081.4L661.9 1021.4M661.9 1081.4L722.0 1021.4M722.0 1081.4L782.2 1021.4M782.2 1081.4L842.4 1021.4M842.4 1081.4L902.6 1021.4M902.6 1081.4L962.7 1021.4M962.7 1081.4L1022.9 1021.4M1022.9 1081.4L1083.1 1021.4M1083.1 1081.4L1143.2 1021.4M1143.2 1081.4L1203.4 1021.4M1203.4 1081.4L1263.6 1021.4M1263.6 1081.4L1323.7 1021.4M1323.7 1081.4L1383.9 1021.4M1383.9 1081.4L1444.1 1021.4M1444.1 1081.4L1504.2 1021.4M1504.2 1081.4L1564.4 1021.4M1564.4 1081.4L1624.6 1021.4M1624.6 1081.4L1684.8 1021.4M1684.8 1081.4L1744.9 1021.4M1744.9 1081.4L1805.1 1021.4M1805.1 1081.4L1865.3 1021.4M1865.3 1081.4L1925.4 1021.4" stroke="#1e5a64" stroke-opacity="0.04" stroke-width="1.2" fill="none"/></svg></div>
<div id="panel">
  <!-- gear -->
  <svg class="pi" style="left:2px;top:5px" width="15" height="15" viewBox="0 0 15 15">
    <g fill="#d8d8d8" transform="translate(7.5 7.5)">
      <circle r="4.3" fill="none" stroke="#d8d8d8" stroke-width="1.7"/>
      <path d="M-0.8 -6.8h1.6l0.3 2.5h-2.2z"/>
      <path d="M-0.8 -6.8h1.6l0.3 2.5h-2.2z" transform="rotate(45)"/>
      <path d="M-0.8 -6.8h1.6l0.3 2.5h-2.2z" transform="rotate(90)"/>
      <path d="M-0.8 -6.8h1.6l0.3 2.5h-2.2z" transform="rotate(135)"/>
      <path d="M-0.8 -6.8h1.6l0.3 2.5h-2.2z" transform="rotate(180)"/>
      <path d="M-0.8 -6.8h1.6l0.3 2.5h-2.2z" transform="rotate(225)"/>
      <path d="M-0.8 -6.8h1.6l0.3 2.5h-2.2z" transform="rotate(270)"/>
      <path d="M-0.8 -6.8h1.6l0.3 2.5h-2.2z" transform="rotate(315)"/>
    </g>
  </svg>
  <div class="ptxt" style="left:22px;top:5px;font-weight:bold;font-size:12.5px;">Menu</div>
  <!-- folder with camera -->
  <svg class="pi" style="left:67px;top:3px" width="20" height="18" viewBox="0 0 20 18">
    <path d="M1.5 2.5 h6 l2 2 h8.5 v11.5 h-16.5z" fill="#b59a6c" stroke="#8f6f3c" stroke-width="1"/>
    <rect x="1" y="6" width="18" height="11" rx="1" fill="#e6d4b2" stroke="#9c7a45" stroke-width="1"/>
    <path d="M6 9v-1.5h1.5M14 9v-1.5h-1.5M6 13v1.5h1.5M14 13v1.5h-1.5" stroke="#6d5636" stroke-width="1" fill="none"/>
    <rect x="8.5" y="9" width="3" height="4" fill="none" stroke="#6d5636" stroke-width="1"/>
  </svg>
  <!-- firefox -->
  <svg class="pi" style="left:106px;top:2px" width="20" height="20" viewBox="0 0 20 20">
    <defs><radialGradient id="ffb" cx="0.6" cy="0.35" r="0.6"><stop offset="0" stop-color="#4fc3f7"/><stop offset="0.6" stop-color="#1565c0"/><stop offset="1" stop-color="#0d2a6b"/></radialGradient>
    <linearGradient id="ffo" x1="0" y1="0" x2="0.3" y2="1"><stop offset="0" stop-color="#f7a21b"/><stop offset="0.6" stop-color="#e8561c"/><stop offset="1" stop-color="#c9281c"/></linearGradient></defs>
    <circle cx="10.5" cy="9.5" r="7.5" fill="url(#ffb)"/>
    <path d="M17.5 8 C18.5 14 14 19 9 18.8 C4 18.5 1 14.5 1.5 9.5 C2 6.5 3 5 4 4 C4 6 5 7 6 7.5 C5.5 9.5 6.5 12.5 9.5 13 C12.5 13.5 14.5 11 14 8.5 C15.5 10 16.5 9.5 17.5 8z" fill="url(#ffo)"/>
    <path d="M16.5 5 C18 6.5 18.5 9 18 11 C17 9 16 8 15 7.5z" fill="#ffd740"/>
  </svg>
  <!-- terminal launcher -->
  <svg class="pi" style="left:128px;top:4px" width="20" height="16" viewBox="0 0 20 16">
    <rect x="0.5" y="0.5" width="19" height="15" fill="#cfcfcf" stroke="#777" stroke-width="1"/>
    <rect x="2" y="2" width="16" height="12" fill="#1e1e1e"/>
    <rect x="2" y="9" width="16" height="5" fill="#3a4240"/>
    <path d="M4.5 3.5l2 1.5-2 1.5" stroke="#ddd" stroke-width="0.8" fill="none"/>
    <rect x="7" y="6.5" width="3" height="1.2" fill="#ddd"/>
  </svg>
  <!-- folder -->
  <svg class="pi" style="left:151px;top:4px" width="19" height="16" viewBox="0 0 19 16">
    <path d="M1.5 1 h6 l2 2 h8 v12 h-16z" fill="#b59a6c" stroke="#8f6f3c" stroke-width="1"/>
    <rect x="0.8" y="5" width="17.4" height="10.5" rx="1" fill="#e6d4b2" stroke="#9c7a45" stroke-width="1"/>
  </svg>

  <!-- tasks -->
  <div class="task" style="left:201px;width:160px;"></div>
  <div class="task" style="left:364px;width:160px;"></div>
  <div class="task act" style="left:527px;width:160px;"></div>
  <svg class="pi" style="left:209px;top:5px" width="16" height="14" viewBox="0 0 16 14">
    <rect x="0.5" y="0.5" width="15" height="13" fill="#d8d8d8" stroke="#444" stroke-width="1"/>
    <rect x="2" y="2" width="12" height="10" fill="#243130"/>
    <path d="M3.5 3l1.8 1.3-1.8 1.3" stroke="#eee" stroke-width="0.8" fill="none"/><rect x="5.5" y="7.2" width="3" height="1" fill="#ccc"/>
  </svg>
  <div class="ptxt" style="left:227px;top:4px;letter-spacing:0.25px;">Terminal</div>
  <svg class="pi" style="left:372px;top:4px" width="16" height="16" viewBox="0 0 20 20">
    <circle cx="10.5" cy="9.5" r="7.5" fill="url(#ffb)"/>
    <path d="M17.5 8 C18.5 14 14 19 9 18.8 C4 18.5 1 14.5 1.5 9.5 C2 6.5 3 5 4 4 C4 6 5 7 6 7.5 C5.5 9.5 6.5 12.5 9.5 13 C12.5 13.5 14.5 11 14 8.5 C15.5 10 16.5 9.5 17.5 8z" fill="url(#ffo)"/>
    <path d="M16.5 5 C18 6.5 18.5 9 18 11 C17 9 16 8 15 7.5z" fill="#ffd740"/>
  </svg>
  <div class="ptxt" style="left:390px;top:4px;">[Facebook - Mozilla Fi...</div>
  <svg class="pi" style="left:535px;top:5px" width="16" height="14" viewBox="0 0 16 14">
    <rect x="0.5" y="0.5" width="15" height="13" fill="#d8d8d8" stroke="#444" stroke-width="1"/>
    <rect x="2" y="2" width="12" height="10" fill="#243130"/>
    <path d="M3.5 3l1.8 1.3-1.8 1.3" stroke="#eee" stroke-width="0.8" fill="none"/><rect x="5.5" y="7.2" width="3" height="1" fill="#ccc"/>
  </svg>
  <div class="ptxt" style="left:553px;top:4px;letter-spacing:0.25px;">Terminal</div>

  <!-- tray -->
  <svg class="pi" style="left:1733px;top:7px" width="11" height="12" viewBox="0 0 11 12">
    <circle cx="5.5" cy="3" r="2.8" fill="#dedede"/>
    <path d="M0.5 12v-3.5c0-1.5 1-2.5 2.5-2.5h5c1.5 0 2.5 1 2.5 2.5v3.5z" fill="#dedede"/>
  </svg>
  <svg class="pi" style="left:1752px;top:7px" width="13" height="12" viewBox="0 0 13 12">
    <rect x="1" y="1" width="11" height="10" rx="1.5" fill="none" stroke="#dedede" stroke-width="2"/>
    <path d="M2 2h2v1.5h-1.5z M11 2h-2v1.5h1.5z" fill="#dedede"/>
  </svg>
  <svg class="pi" style="left:1770px;top:6px" width="14" height="13" viewBox="0 0 14 13">
    <path d="M0.5 4.5h2.5l3.5-3v10l-3.5-3h-2.5z" fill="#dedede"/>
    <path d="M8 4.5q1 2 0 4M10 3q2 3.5 0 7M12 1.5q3 5 0 10" stroke="#dedede" stroke-width="1.2" fill="none"/>
  </svg>
  <svg class="pi" style="left:1792px;top:6px" width="12" height="14" viewBox="0 0 12 14">
    <path d="M3.5 0.5h5v1.5h2.5v11.5h-10v-11.5h2.5z" fill="none" stroke="#9a9a9a" stroke-width="1"/>
    <path d="M7 3.5l-3.5 4h2.5l-1 3.5 3.5-4h-2.5z" fill="#dedede"/>
  </svg>
  <div class="ptxt" style="left:1806px;top:5px;font-size:11.5px;">100%</div>
  <svg class="pi" style="left:1841px;top:4px" width="16" height="16" viewBox="-8 -8 16 16">
    <g transform="rotate(-20)"><path d="M0 0 L0 -7.2 A7.2 7.2 0 0 1 6.24 -3.6 Z" fill="#2a90d2" transform="rotate(0)"/><path d="M0 0 L0 -7.2 A7.2 7.2 0 0 1 6.24 -3.6 Z" fill="#1e7cc0" transform="rotate(60)"/><path d="M0 0 L0 -7.2 A7.2 7.2 0 0 1 6.24 -3.6 Z" fill="#2584c6" transform="rotate(120)"/><path d="M0 0 L0 -7.2 A7.2 7.2 0 0 1 6.24 -3.6 Z" fill="#3a94d0" transform="rotate(180)"/><path d="M0 0 L0 -7.2 A7.2 7.2 0 0 1 6.24 -3.6 Z" fill="#d9d9d9" transform="rotate(240)"/><path d="M0 0 L0 -7.2 A7.2 7.2 0 0 1 6.24 -3.6 Z" fill="#eeeeee" transform="rotate(300)"/><path d="M0 0 Q3.5 -2 6.5 -5.5" stroke="#525252" stroke-width="0.9" fill="none" transform="rotate(15)"/><path d="M0 0 Q3.5 -2 6.5 -5.5" stroke="#525252" stroke-width="0.9" fill="none" transform="rotate(75)"/><path d="M0 0 Q3.5 -2 6.5 -5.5" stroke="#525252" stroke-width="0.9" fill="none" transform="rotate(135)"/><path d="M0 0 Q3.5 -2 6.5 -5.5" stroke="#525252" stroke-width="0.9" fill="none" transform="rotate(195)"/><path d="M0 0 Q3.5 -2 6.5 -5.5" stroke="#525252" stroke-width="0.9" fill="none" transform="rotate(255)"/><path d="M0 0 Q3.5 -2 6.5 -5.5" stroke="#525252" stroke-width="0.9" fill="none" transform="rotate(315)"/></g><circle r="1.8" fill="#3a3a3a"/>
  </svg>
  <div class="ptxt" style="left:1862px;top:5px;font-weight:bold;font-size:12px;letter-spacing:0.9px;">02:29</div>
  <svg class="pi" style="left:1903px;top:7px" width="15" height="12" viewBox="0 0 15 12">
    <rect x="1" y="1" width="10" height="6.5" fill="none" stroke="#dedede" stroke-width="1.6"/>
    <path d="M13.5 4v7h-9.5" fill="none" stroke="#dedede" stroke-width="1.6"/>
  </svg>
</div>

<!-- desktop icons -->
<svg width="0" height="0" style="position:absolute">
  <defs>
    <linearGradient id="ng" x1="0" y1="0" x2="0" y2="1"><stop offset="0" stop-color="#dfe98a"/><stop offset="0.45" stop-color="#a9ba2b"/><stop offset="1" stop-color="#8a9c16"/></linearGradient>
    <symbol id="note" viewBox="0 0 37 36">
      <ellipse cx="19" cy="34" rx="15" ry="2" fill="rgba(0,0,0,0.12)"/>
      <path d="M13.5 4.5 L36.5 0.5 V28 C36.5 31.5 32 33 28.5 33 C24.5 33 22.5 31 23.5 29 C24.5 26.5 29 25 34 26.5 V9 L16 12 V30 C16 33.5 11.5 35.5 8 35.5 C3.5 35.5 0.8 33.5 1.5 31 C2.5 28.5 7 27 13.5 28.5z" fill="url(#ng)" stroke="#6f7a12" stroke-width="1"/>
      <path d="M15 5.5 L35.5 2 V6.5 L15 10z" fill="#e6eda0" opacity="0.55"/>
      <ellipse cx="7" cy="31" rx="3" ry="1.3" fill="#f4f7d0" opacity="0.7" transform="rotate(-12 7 31)"/>
      <ellipse cx="29" cy="28.5" rx="3" ry="1.3" fill="#f4f7d0" opacity="0.7" transform="rotate(-12 29 28.5)"/>
    </symbol>
  </defs>
</svg>
<svg style="position:absolute;left:68px;top:39px" width="37" height="36"><use href="#note"/></svg>
<div class="dl" style="left:8px;top:84px;width:160px;">Pink - Just Like A Pill<br>(40p).mp3</div>
<svg style="position:absolute;left:68px;top:131px" width="37" height="36"><use href="#note"/></svg>
<div class="dl" style="left:8px;top:176px;width:160px;">xtrium_lnx_-_light_<br>city.mp3</div>
<svg style="position:absolute;left:64px;top:226px" width="48" height="48" viewBox="0 0 48 48">
  <defs><linearGradient id="stg" x1="0" y1="0" x2="0" y2="1"><stop offset="0" stop-color="#0b1430"/><stop offset="0.45" stop-color="#0f2457"/><stop offset="1" stop-color="#1b7ab9"/></linearGradient>
  <linearGradient id="stw" x1="0" y1="0" x2="0" y2="1"><stop offset="0" stop-color="#d0dde4"/><stop offset="1" stop-color="#ffffff"/></linearGradient></defs>
  <circle cx="24" cy="24.4" r="24" fill="url(#stg)"/>
  <path d="M0.3 22 L12.5 26.5 C13.5 25.5 15 24.8 16.8 24.8 L23 17 C23.5 12 27.5 8.6 32 8.6 C36.8 8.6 40.7 12.5 40.7 17.4 C40.7 22.2 36.8 26.2 32 26.2 L22.8 32.5 C22.5 35.8 19.8 38.2 16.6 38.2 C13.7 38.2 11.3 36.2 10.8 33.5 L1.2 30.3 C0.5 27.6 0.2 24.8 0.3 22z" fill="url(#stw)"/>
  <circle cx="31.9" cy="17.4" r="5.4" fill="none" stroke="#15275a" stroke-width="1.1"/>
  <path d="M16.3 27.9 A4.3 4.3 0 1 1 13.3 34.6" fill="none" stroke="#15275a" stroke-width="1.1"/>
</svg>
<div class="dl" style="left:8px;top:276px;width:160px;">Steam</div>
<div style="position:absolute;left:56px;top:311px;width:64px;height:64px;background:#050505;overflow:hidden;">
  <div style="position:absolute;left:2px;top:14px;width:60px;text-align:center;color:#e8e8e8;font-weight:bold;font-size:18px;line-height:17px;letter-spacing:-1px;transform:scaleY(1.1);">METRO</div>
  <div style="position:absolute;left:0;top:33px;width:64px;text-align:center;color:#f0f0f0;font-weight:bold;font-size:10px;line-height:10px;letter-spacing:-0.3px;">LAST LIGHT</div>
  <div style="position:absolute;left:1px;top:42px;width:62px;height:7px;background:#f3a41b;color:#111;font-weight:bold;font-size:6px;line-height:7px;text-align:center;letter-spacing:2px;">REDUX</div>
</div>
<div class="dl" style="left:8px;top:376px;width:160px;">Metro: Last Light<br>Redux</div>
<svg style="position:absolute;left:69px;top:429px" width="38" height="44" viewBox="0 0 38 44">
  <defs><linearGradient id="pg" x1="0" y1="0" x2="0" y2="1"><stop offset="0" stop-color="#fbfbfb"/><stop offset="1" stop-color="#e4e4e4"/></linearGradient></defs>
  <path d="M2 1.5h24l10 10v30h-34z" fill="url(#pg)" stroke="#c8c8c8" stroke-width="1"/>
  <path d="M26 1.5v10h10" fill="#ececec" stroke="#c8c8c8" stroke-width="1"/>
</svg>
<div class="dl" style="left:8px;top:476px;width:160px;">Maali_being_kinky.txt</div>

<svg style="position:absolute;left:715px;top:182px" width="37" height="36"><use href="#note"/></svg>
<div class="dl" style="left:655px;top:227px;width:160px;">sia_chandelier_40p.<br>mp3</div>
<svg style="position:absolute;left:869px;top:182px" width="37" height="36"><use href="#note"/></svg>
<div class="dl" style="left:809px;top:227px;width:160px;">SIA - Chandelier<br>cover by KEROZEN<br>[Full Rock Band Cov...</div>

<div class="win" style="left:355px;top:332px;width:722px;height:466px;">
  <div class="title">Terminal</div>
  <div class="wb" style="right:78px;top:18px;width:5px;height:2px;background:#9b9b9b;"></div>
  <div class="wb" style="right:45px;top:14px;width:6px;height:6px;box-sizing:border-box;border:2px solid #9b9b9b;"></div>
  <svg class="wb" style="right:13px;top:14px" width="7" height="7" viewBox="0 0 7 7"><path d="M1 1L6 6M6 1L1 6" stroke="#9b9b9b" stroke-width="2"/></svg>

  <div class="term" style="top:32px;padding:1px 0 0 1px;"><div class="l"><div class="tx"><span class="g">phaazon</span><span class="r">@</span><span class="c">illusion</span><span class="dm"> ~ </span><span class="r">%</span> primusrun glxinfo | grep -i OpenGL</div></div><div class="l"><div class="tx">OpenGL vendor string: NVIDIA Corporation</div></div><div class="l"><div class="tx">OpenGL renderer string: GeForce GTX 970M/PCIe/SSE2</div></div><div class="l"><div class="tx">OpenGL core profile version string: 4.4.0 NVIDIA 346.47</div></div><div class="l"><div class="tx">OpenGL core profile shading language version string: 4.40 NVIDIA via Cg compiler</div></div><div class="l"><div class="tx">OpenGL core profile context flags: (none)</div></div><div class="l"><div class="tx">OpenGL core profile profile mask: core profile</div></div><div class="l"><div class="tx">OpenGL core profile extensions:</div></div><div class="l"><div class="tx">OpenGL version string: 4.5.0 NVIDIA 346.47</div></div><div class="l"><div class="tx">OpenGL shading language version string: 4.50 NVIDIA</div></div><div class="l"><div class="tx">OpenGL context flags: (none)</div></div><div class="l"><div class="tx">OpenGL profile mask: (none)</div></div><div class="l"><div class="tx">OpenGL extensions:</div></div><div class="l"><div class="tx"><span class="g">phaazon</span><span class="r">@</span><span class="c">illusion</span><span class="dm"> ~ </span><span class="r">%</span> <span class="cur"> </span></div></div></div>
</div>
<div class="win" style="left:1132px;top:92px;width:722px;height:466px;">
  <div class="title">Terminal</div>
  <div class="wb" style="right:78px;top:18px;width:5px;height:2px;background:#9b9b9b;"></div>
  <div class="wb" style="right:45px;top:14px;width:6px;height:6px;box-sizing:border-box;border:2px solid #9b9b9b;"></div>
  <svg class="wb" style="right:13px;top:14px" width="7" height="7" viewBox="0 0 7 7"><path d="M1 1L6 6M6 1L1 6" stroke="#9b9b9b" stroke-width="2"/></svg>

  <div class="term" style="top:32px;padding:1px 0 0 1px;"><div class="l bar"><div class="tx"><span class="ttl"> Welcome to Arch Linux World Domination, Inc. &lt;+&gt; Read: https://bbs.archlinux.or</span></div></div><div class="l"><div class="tx">02:28 <span class="ex">-</span><span class="w">!</span><span class="ex">-</span> <span class="c">duncannz</span> <span class="br">[</span>~duncannz@116.251.193.92<span class="br">]</span> has quit <span class="br">[</span>Max SendQ exceeded<span class="br">]</span></div></div><div class="l"><div class="tx">02:28 <span class="ex">-</span><span class="w">!</span><span class="ex">-</span> <span class="cb">_Ulan1</span> <span class="br">[</span><span class="c">~Thunderbi@2.28.100.60</span><span class="br">]</span> has joined <span class="b">#archlinux</span></div></div><div class="l"><div class="tx">02:28 <span class="gr">&lt;</span> <span class="y">Earnestly</span><span class="gr">&gt;</span> phaazon: wine is good, very good with games, but not so good</div></div><div class="l"><div class="tx">                   with office-like software</div></div><div class="l"><div class="tx">02:29 <span class="gr">&lt;</span> <span class="yd">Earnestly</span><span class="gr">&gt;</span> Mostly because the contributions come from game users</div></div><div class="l"><div class="tx">02:29 <span class="ex">-</span><span class="w">!</span><span class="ex">-</span> <span class="c">duncannz</span> <span class="br">[</span><span class="c">~duncannz@116.251.193.92</span><span class="br">]</span> has joined <span class="b">#archlinux</span></div></div><div class="l"><div class="tx">02:29 <span class="gr">&lt;</span> <span class="mv">oats</span><span class="gr">&gt;</span> Criminalised: very solid. If you need help, be sure to ask</div></div><div class="l"><div class="tx">              intelligent questions (to avoid a swift kick to the head),</div></div><div class="l"><div class="tx">              provide info of what you're trying to do, what happened, etc.</div></div><div class="l"><div class="tx">02:29 <span class="gr">&lt;</span> <span class="b">phaazon</span><span class="gr">&gt;</span> Earnestly: I should try to play my Homeworld Remastered</div></div><div class="l"><div class="tx">                 Edition through wine then!</div></div><div class="l"><div class="tx">02:29 <span class="ex">-</span><span class="w">!</span><span class="ex">-</span> <span class="c">cotko</span> <span class="br">[</span>~ahmed@BSN-142-61-247.dynamic.siol.net<span class="br">]</span> has quit <span class="br">[</span>Ping</div></div><div class="l"><div class="tx">          timeout: 256 seconds<span class="br">]</span></div></div><div class="l"><div class="tx">02:29 <span class="ex">-</span><span class="w">!</span><span class="ex">-</span> <span class="c">argo</span> <span class="br">[</span>~argo@unaffiliated/argo<span class="br">]</span> has quit <span class="br">[</span>Quit: No Ping reply in 180</div></div><div class="l"><div class="tx">          seconds.<span class="br">]</span></div></div><div class="l"><div class="tx">02:29 <span class="ex">-</span><span class="w">!</span><span class="ex">-</span> <span class="c">AsamK</span> <span class="br">[</span>~AsamK@p5DE9660C.dip0.t-ipconnect.de<span class="br">]</span> has quit <span class="br">[</span>Ping timeout:</div></div><div class="l"><div class="tx">          245 seconds<span class="br">]</span></div></div><div class="l"><div class="tx">02:29 <span class="ex">-</span><span class="w">!</span><span class="ex">-</span> <span class="c">argo</span> <span class="br">[</span><span class="c">~argo@unaffiliated/argo</span><span class="br">]</span> has joined <span class="b">#archlinux</span></div></div><div class="l"><div class="tx">02:29 <span class="ex">-</span><span class="w">!</span><span class="ex">-</span> <span class="c">SolitaryCipher</span> <span class="br">[</span>~nick@unaffiliated/solitarycipher<span class="br">]</span> has quit <span class="br">[</span>Quit:</div></div><div class="l"><div class="tx">          WeeChat 1.1.1<span class="br">]</span></div></div><div class="l"><div class="tx">02:29 <span class="gr">&lt;</span> <span class="y">Earnestly</span><span class="gr">&gt;</span> phaazon: Check with winehq</div></div><div class="l bar"><div class="tx"><span class="st"> </span><span class="stc">[</span><span class="st">:Cnt:barjavel.freenode.net</span><span class="stc">]</span><span class="st"> </span><span class="stc">[</span><span class="st">phaazon(</span><span class="stc">+</span><span class="st">i) (</span><span class="stg">zZzZ</span><span class="st">)</span><span class="stc">]</span><span class="st"> </span><span class="stc">[</span><span class="st">8:freenode/#ar </span><span class="stc">[</span><span class="st">Act: </span><span class="stc">1,</span><span class="st">2</span><span class="stc">,</span><span class="st">4</span><span class="stc">]</span><span class="st"> </span></div></div><div class="l"><div class="tx"><span class="inp">[#archlinux] </span><span class="cur"> </span></div></div></div>
</div>

</body></html>
